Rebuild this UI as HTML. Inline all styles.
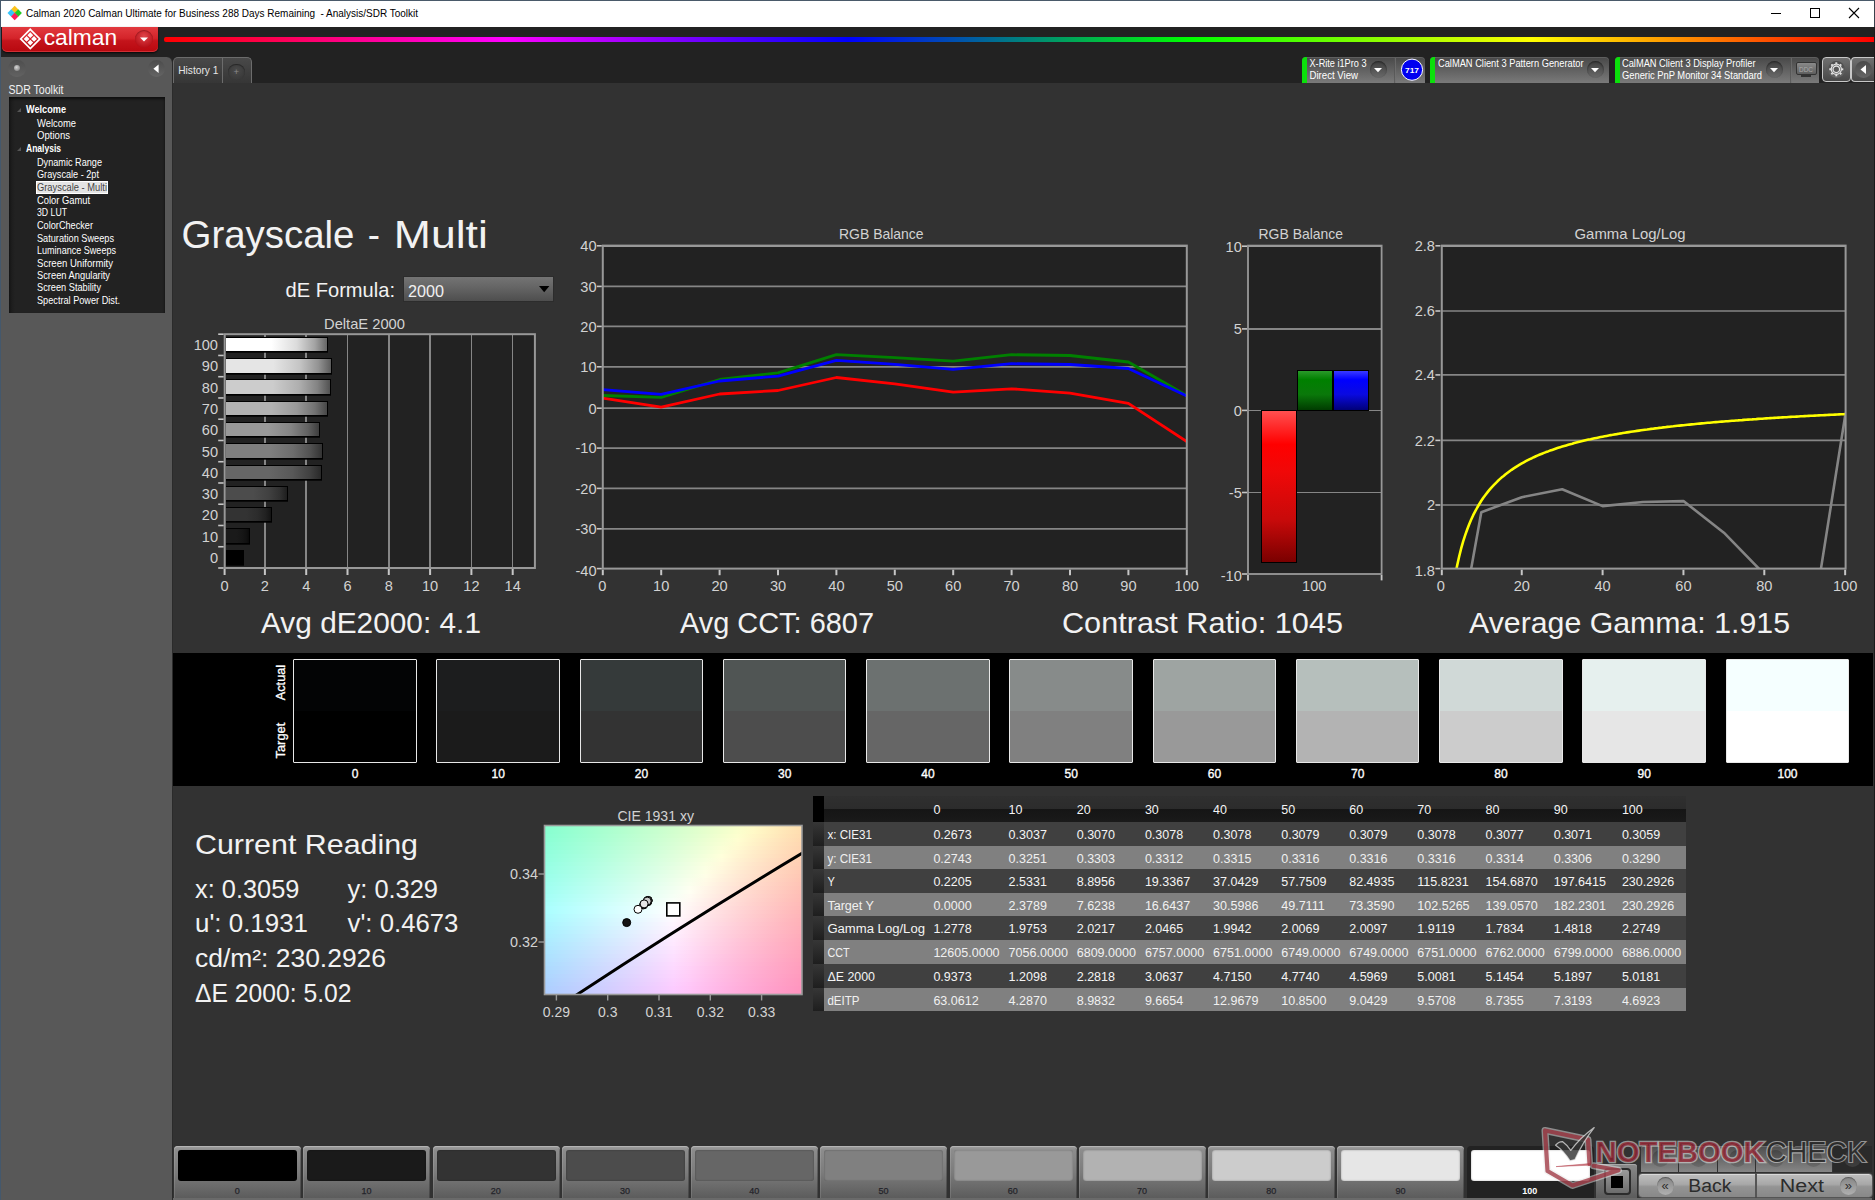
<!DOCTYPE html>
<html lang="en"><head><meta charset="utf-8"><title>Calman 2020 - Analysis/SDR Toolkit</title>
<style>
html,body{margin:0;padding:0;background:#323232;}
body{width:1875px;height:1200px;overflow:hidden;position:relative;font-family:"Liberation Sans",sans-serif;}
#root{position:absolute;left:0;top:0;width:1875px;height:1200px;overflow:hidden;background:#323232;}
#root div{position:absolute;box-sizing:border-box;}
#ov{position:absolute;left:0;top:0;}
#ov text{font-family:"Liberation Sans",sans-serif;}
</style></head><body>
<div id="root">
<div style="left:0px;top:0px;width:1875px;height:27px;background:#fff;border-top:1px solid #4a5a6a;"></div>
<div style="left:0px;top:26.6px;width:1875px;height:56.4px;background:#222;"></div>
<div style="left:1.7px;top:26.6px;width:156px;height:25px;background:linear-gradient(#e23a3f 0%,#d4242a 45%,#c4141b 55%,#b8080f 100%);border-radius:0 0 5px 5px;box-shadow:0 1px 2px rgba(0,0,0,.8), inset 0 -1px 0 rgba(255,120,120,.35);"></div>
<div style="left:135px;top:30px;width:18px;height:18px;border-radius:50%;background:radial-gradient(circle at 50% 35%,#e0444a,#b81018 75%);box-shadow:inset 0 1px 1px rgba(0,0,0,.25);"></div>
<div style="left:164px;top:37px;width:1710px;height:5px;background:linear-gradient(90deg,#ff0000 0%,#ff00ff 20%,#0000ff 40%,#00ff00 60%,#ffff00 80%,#ff0000 100%);border-radius:2px 0 0 2px;"></div>
<div style="left:0px;top:56.8px;width:173.4px;height:1143.2px;background:#585858;border-radius:0 6px 0 0;border-right:1px solid #2b2b2b;"></div>
<div style="left:8.3px;top:59.8px;width:17.4px;height:17.4px;border-radius:50%;background:linear-gradient(#4e4e4e,#626262);"></div>
<div style="left:13.6px;top:64.6px;width:6.8px;height:6.8px;border-radius:50%;background:radial-gradient(circle at 42% 38%,#d8d8d8,#8c8c8c 70%,#6a6a6a);"></div>
<div style="left:148px;top:60.4px;width:17px;height:17px;border-radius:50%;background:linear-gradient(#4c4c4c,#646464);"></div>
<div style="left:9px;top:97px;width:156px;height:216px;background:linear-gradient(90deg,#1a1a1a 0,#222 6px,#222 100%);box-shadow:inset 0 2px 3px rgba(0,0,0,.6);"></div>
<div style="left:36px;top:181px;width:72px;height:13px;background:#e4e4e4;border:1px solid #fff;"></div>
<div style="left:173.3px;top:57px;width:49.6px;height:25.8px;background:linear-gradient(#494949,#363636);border-radius:5px 0 0 0;border:1px solid #6c6c6c;border-bottom:none;"></div>
<div style="left:222px;top:57px;width:29.8px;height:25.8px;background:linear-gradient(#494949,#363636);border-radius:0 5px 0 0;border:1px solid #6c6c6c;border-bottom:none;"></div>
<div style="left:228.2px;top:63.5px;width:16.4px;height:16.4px;border-radius:50%;background:radial-gradient(circle at 50% 40%,#4a4a4a,#333);box-shadow:inset 0 1px 1px rgba(0,0,0,.4);"></div>
<div style="left:173px;top:83px;width:1702px;height:1117px;background:#323232;"></div>
<div style="left:1302px;top:57px;width:123px;height:26px;background:linear-gradient(#484848,#7a7a7a);border-radius:4px 4px 0 0;box-shadow:inset 0 1px 0 rgba(255,255,255,.12);"></div>
<div style="left:1302px;top:57px;width:5px;height:26px;background:#0be00b;border-radius:4px 0 0 0;"></div>
<div style="left:1369.5px;top:61.0px;width:17px;height:17px;border-radius:50%;background:linear-gradient(#3e3e3e,#6a6a6a);box-shadow:inset 0 1px 2px rgba(0,0,0,.45);"></div>
<div style="left:1394px;top:58px;width:2px;height:25px;background:linear-gradient(90deg,#444,#808080);opacity:.7;"></div>
<div style="left:1430px;top:57px;width:179px;height:26px;background:linear-gradient(#484848,#7a7a7a);border-radius:4px 4px 0 0;box-shadow:inset 0 1px 0 rgba(255,255,255,.12);"></div>
<div style="left:1430px;top:57px;width:5px;height:26px;background:#0be00b;border-radius:4px 0 0 0;"></div>
<div style="left:1586.5px;top:61.0px;width:17px;height:17px;border-radius:50%;background:linear-gradient(#3e3e3e,#6a6a6a);box-shadow:inset 0 1px 2px rgba(0,0,0,.45);"></div>
<div style="left:1615px;top:57px;width:204px;height:26px;background:linear-gradient(#484848,#7a7a7a);border-radius:4px 4px 0 0;box-shadow:inset 0 1px 0 rgba(255,255,255,.12);"></div>
<div style="left:1615px;top:57px;width:5px;height:26px;background:#0be00b;border-radius:4px 0 0 0;"></div>
<div style="left:1765.5px;top:61.0px;width:17px;height:17px;border-radius:50%;background:linear-gradient(#3e3e3e,#6a6a6a);box-shadow:inset 0 1px 2px rgba(0,0,0,.45);"></div>
<div style="left:1790px;top:58px;width:2px;height:25px;background:linear-gradient(90deg,#444,#808080);opacity:.7;"></div>
<div style="left:1795.5px;top:61.5px;width:21px;height:13px;background:linear-gradient(#8a8a8a,#5e5e5e);border:1.5px solid #333;border-radius:2px;"></div>
<div style="left:1801px;top:74.5px;width:10px;height:2px;background:#333;"></div>
<div style="left:1822px;top:57px;width:29px;height:25px;background:linear-gradient(#707070,#484848);border:1px solid #c8c8c8;border-radius:4px;"></div>
<div style="left:1851px;top:57px;width:23px;height:25px;background:linear-gradient(#707070,#484848);border:1px solid #c8c8c8;border-radius:4px 0 0 4px;border-right:none;"></div>
<div style="left:1828px;top:61px;width:17px;height:17px;border-radius:50%;background:linear-gradient(#4a4a4a,#666);"></div>
<div style="left:1855px;top:61px;width:17px;height:17px;border-radius:50%;background:linear-gradient(#4a4a4a,#666);"></div>
<div style="left:0px;top:0px;width:1.2px;height:1200px;background:#44586c;"></div>
<div style="left:1873.6px;top:26.6px;width:1.4px;height:1174px;background:#1a1a1a;"></div>
<div style="left:1873.8px;top:0px;width:1.2px;height:27px;background:#39424c;"></div>
<div style="left:402.8px;top:275.6px;width:151.6px;height:26px;background:linear-gradient(#747474,#646464 45%,#4e4e4e);border:1px solid #2c2c2c;"></div>
<div style="left:224.7px;top:334.2px;width:310.2px;height:233.8px;background:#222222;"></div>
<div style="left:264.1px;top:334.2px;width:1.6px;height:233.8px;background:#868686;"></div>
<div style="left:305.4px;top:334.2px;width:1.6px;height:233.8px;background:#868686;"></div>
<div style="left:346.7px;top:334.2px;width:1.6px;height:233.8px;background:#868686;"></div>
<div style="left:388.0px;top:334.2px;width:1.6px;height:233.8px;background:#868686;"></div>
<div style="left:429.3px;top:334.2px;width:1.6px;height:233.8px;background:#868686;"></div>
<div style="left:470.6px;top:334.2px;width:1.6px;height:233.8px;background:#868686;"></div>
<div style="left:511.9px;top:334.2px;width:1.6px;height:233.8px;background:#868686;"></div>
<div style="left:225.7px;top:336.9px;width:102.7px;height:15.4px;background:linear-gradient(90deg,rgb(255,255,255) 0%,rgb(255,255,255) 45%,rgb(219,219,219) 70%,rgb(163,163,163) 88%,rgb(102,102,102) 100%);border:1px solid #000;border-left:none;box-shadow:0 1px 0 rgba(0,0,0,.7);"></div>
<div style="left:225.7px;top:358.2px;width:106.3px;height:15.4px;background:linear-gradient(90deg,rgb(229,229,229) 0%,rgb(229,229,229) 45%,rgb(197,197,197) 70%,rgb(147,147,147) 88%,rgb(92,92,92) 100%);border:1px solid #000;border-left:none;box-shadow:0 1px 0 rgba(0,0,0,.7);"></div>
<div style="left:225.7px;top:379.4px;width:105.4px;height:15.4px;background:linear-gradient(90deg,rgb(204,204,204) 0%,rgb(204,204,204) 45%,rgb(175,175,175) 70%,rgb(131,131,131) 88%,rgb(82,82,82) 100%);border:1px solid #000;border-left:none;box-shadow:0 1px 0 rgba(0,0,0,.7);"></div>
<div style="left:225.7px;top:400.7px;width:102.5px;height:15.4px;background:linear-gradient(90deg,rgb(178,178,178) 0%,rgb(178,178,178) 45%,rgb(153,153,153) 70%,rgb(114,114,114) 88%,rgb(71,71,71) 100%);border:1px solid #000;border-left:none;box-shadow:0 1px 0 rgba(0,0,0,.7);"></div>
<div style="left:225.7px;top:421.9px;width:94.0px;height:15.4px;background:linear-gradient(90deg,rgb(153,153,153) 0%,rgb(153,153,153) 45%,rgb(132,132,132) 70%,rgb(98,98,98) 88%,rgb(61,61,61) 100%);border:1px solid #000;border-left:none;box-shadow:0 1px 0 rgba(0,0,0,.7);"></div>
<div style="left:225.7px;top:443.2px;width:97.7px;height:15.4px;background:linear-gradient(90deg,rgb(127,127,127) 0%,rgb(127,127,127) 45%,rgb(109,109,109) 70%,rgb(81,81,81) 88%,rgb(51,51,51) 100%);border:1px solid #000;border-left:none;box-shadow:0 1px 0 rgba(0,0,0,.7);"></div>
<div style="left:225.7px;top:464.5px;width:96.5px;height:15.4px;background:linear-gradient(90deg,rgb(102,102,102) 0%,rgb(102,102,102) 45%,rgb(88,88,88) 70%,rgb(65,65,65) 88%,rgb(41,41,41) 100%);border:1px solid #000;border-left:none;box-shadow:0 1px 0 rgba(0,0,0,.7);"></div>
<div style="left:225.7px;top:485.7px;width:62.4px;height:15.4px;background:linear-gradient(90deg,rgb(76,76,76) 0%,rgb(76,76,76) 45%,rgb(65,65,65) 70%,rgb(49,49,49) 88%,rgb(30,30,30) 100%);border:1px solid #000;border-left:none;box-shadow:0 1px 0 rgba(0,0,0,.7);"></div>
<div style="left:225.7px;top:507.0px;width:46.2px;height:15.4px;background:linear-gradient(90deg,rgb(51,51,51) 0%,rgb(51,51,51) 45%,rgb(44,44,44) 70%,rgb(33,33,33) 88%,rgb(20,20,20) 100%);border:1px solid #000;border-left:none;box-shadow:0 1px 0 rgba(0,0,0,.7);"></div>
<div style="left:225.7px;top:528.2px;width:24.1px;height:15.4px;background:linear-gradient(90deg,rgb(26,26,26) 0%,rgb(26,26,26) 45%,rgb(22,22,22) 70%,rgb(17,17,17) 88%,rgb(10,10,10) 100%);border:1px solid #000;border-left:none;box-shadow:0 1px 0 rgba(0,0,0,.7);"></div>
<div style="left:225.7px;top:549.5px;width:18.5px;height:15.4px;background:linear-gradient(90deg,rgb(0,0,0) 0%,rgb(0,0,0) 45%,rgb(0,0,0) 70%,rgb(0,0,0) 88%,rgb(0,0,0) 100%);border:1px solid #000;border-left:none;box-shadow:0 1px 0 rgba(0,0,0,.7);"></div>
<div style="left:602.8px;top:245.6px;width:584.0px;height:323.0px;background:#222222;"></div>
<div style="left:1248.0px;top:245.6px;width:133.5999999999999px;height:328.4px;background:#222222;"></div>
<div style="left:1248.0px;top:328.0px;width:133.5999999999999px;height:1.7px;background:#868686;"></div>
<div style="left:1248.0px;top:409.5px;width:133.5999999999999px;height:1.7px;background:#868686;"></div>
<div style="left:1248.0px;top:491.6px;width:133.5999999999999px;height:1.7px;background:#868686;"></div>
<div style="left:1261.2px;top:409.79999999999995px;width:36px;height:153.4px;background:linear-gradient(#ff5050 0%,#ff0000 22%,#f00808 40%,#c80a0a 72%,#7a0000 100%);border:1px solid #000;"></div>
<div style="left:1297.2px;top:369.6px;width:36.2px;height:41.6px;background:linear-gradient(#2a9a2a 0%,#008000 22%,#0a780a 60%,#003c00 100%);border:1px solid #000;"></div>
<div style="left:1333.2px;top:369.6px;width:36.2px;height:41.6px;background:linear-gradient(#3a3aff 0%,#0000ff 22%,#0a0ae0 60%,#000078 100%);border:1px solid #000;"></div>
<div style="left:1441.8px;top:245.6px;width:403.79999999999995px;height:323.0px;background:#222222;"></div>
<div style="left:173.4px;top:653.3px;width:1699.2px;height:132.8px;background:#000;"></div>
<div style="left:293.0px;top:659.2px;width:123.5px;height:103.6px;background:linear-gradient(#030405 0,#030405 50%,#000000 50%,#000000 100%);border:1.5px solid #e8e8e8;border-radius:1px;"></div>
<div style="left:436.2px;top:659.2px;width:123.5px;height:103.6px;background:linear-gradient(#1c1d1e 0,#1c1d1e 50%,#1b1b1b 50%,#1b1b1b 100%);border:1.5px solid #e8e8e8;border-radius:1px;"></div>
<div style="left:579.5px;top:659.2px;width:123.5px;height:103.6px;background:linear-gradient(#353a3a 0,#353a3a 50%,#333333 50%,#333333 100%);border:1.5px solid #e8e8e8;border-radius:1px;"></div>
<div style="left:722.8px;top:659.2px;width:123.5px;height:103.6px;background:linear-gradient(#505554 0,#505554 50%,#4d4d4d 50%,#4d4d4d 100%);border:1.5px solid #e8e8e8;border-radius:1px;"></div>
<div style="left:866.0px;top:659.2px;width:123.5px;height:103.6px;background:linear-gradient(#6c7170 0,#6c7170 50%,#666666 50%,#666666 100%);border:1.5px solid #e8e8e8;border-radius:1px;"></div>
<div style="left:1009.2px;top:659.2px;width:123.5px;height:103.6px;background:linear-gradient(#878b8a 0,#878b8a 50%,#808080 50%,#808080 100%);border:1.5px solid #e8e8e8;border-radius:1px;"></div>
<div style="left:1152.5px;top:659.2px;width:123.5px;height:103.6px;background:linear-gradient(#9ea4a2 0,#9ea4a2 50%,#999999 50%,#999999 100%);border:1.5px solid #e8e8e8;border-radius:1px;"></div>
<div style="left:1295.8px;top:659.2px;width:123.5px;height:103.6px;background:linear-gradient(#b6bfbc 0,#b6bfbc 50%,#b3b3b3 50%,#b3b3b3 100%);border:1.5px solid #e8e8e8;border-radius:1px;"></div>
<div style="left:1439.0px;top:659.2px;width:123.5px;height:103.6px;background:linear-gradient(#d0d9d7 0,#d0d9d7 50%,#cccccc 50%,#cccccc 100%);border:1.5px solid #e8e8e8;border-radius:1px;"></div>
<div style="left:1582.2px;top:659.2px;width:123.5px;height:103.6px;background:linear-gradient(#e6f0ee 0,#e6f0ee 50%,#e6e6e6 50%,#e6e6e6 100%);border:1.5px solid #e8e8e8;border-radius:1px;"></div>
<div style="left:1725.5px;top:659.2px;width:123.5px;height:103.6px;background:linear-gradient(#f5ffff 0,#f5ffff 50%,#ffffff 50%,#ffffff 100%);border:1.5px solid #e8e8e8;border-radius:1px;"></div>
<div style="left:544.5px;top:825.5px;width:257.5px;height:169.0px;background:#fff;"></div>
<div style="left:544.5px;top:825.5px;width:257.5px;height:4.3px;background:linear-gradient(90deg,#87ffcf,#8fffcf,#98ffce,#a1ffce,#aaffce,#b3ffcd,#bdffcd,#c6ffcc,#d0ffcc,#daffcc,#e4ffcb,#eeffcb,#f8ffca,#fffbc7,#fff1be,#ffe8b7,#ffdfaf);"></div>
<div style="left:544.5px;top:829.5px;width:257.5px;height:4.3px;background:linear-gradient(90deg,#88ffd1,#91ffd1,#9affd1,#a3ffd0,#acffd0,#b5ffcf,#bfffcf,#c8ffcf,#d2ffce,#dcffce,#e6ffcd,#f0ffcd,#fbffcd,#fff9c7,#ffefbf,#ffe5b7,#ffddb0);"></div>
<div style="left:544.5px;top:833.5px;width:257.5px;height:4.3px;background:linear-gradient(90deg,#8affd3,#92ffd3,#9bffd3,#a4ffd2,#aeffd2,#b7ffd2,#c1ffd1,#caffd1,#d4ffd0,#deffd0,#e8ffd0,#f3ffcf,#fdffcf,#fff6c7,#ffedbf,#ffe3b7,#ffdbb0);"></div>
<div style="left:544.5px;top:837.5px;width:257.5px;height:4.3px;background:linear-gradient(90deg,#8bffd5,#94ffd5,#9dffd5,#a6ffd4,#afffd4,#b9ffd4,#c2ffd3,#ccffd3,#d6ffd3,#e0ffd2,#ebffd2,#f5ffd2,#fffed1,#fff4c8,#ffeac0,#ffe1b8,#ffd9b0);"></div>
<div style="left:544.5px;top:841.5px;width:257.5px;height:4.3px;background:linear-gradient(90deg,#8dffd8,#96ffd7,#9fffd7,#a8ffd7,#b1ffd6,#bbffd6,#c4ffd6,#ceffd5,#d8ffd5,#e2ffd5,#edffd4,#f7ffd4,#fffcd1,#fff2c8,#ffe8c0,#ffdfb8,#ffd7b1);"></div>
<div style="left:544.5px;top:845.5px;width:257.5px;height:4.3px;background:linear-gradient(90deg,#8effda,#97ffd9,#a0ffd9,#aaffd9,#b3ffd9,#bdffd8,#c6ffd8,#d0ffd8,#daffd7,#e5ffd7,#efffd7,#faffd6,#fffad1,#ffefc9,#ffe6c0,#ffddb8,#ffd5b1);"></div>
<div style="left:544.5px;top:849.5px;width:257.5px;height:4.3px;background:linear-gradient(90deg,#90ffdc,#99ffdc,#a2ffdb,#acffdb,#b5ffdb,#bfffdb,#c8ffda,#d2ffda,#ddffda,#e7ffd9,#f1ffd9,#fcffd9,#fff7d2,#ffedc9,#ffe4c1,#ffdbb9,#ffd3b2);"></div>
<div style="left:544.5px;top:853.5px;width:257.5px;height:4.3px;background:linear-gradient(90deg,#92ffde,#9bffde,#a4ffde,#adffdd,#b7ffdd,#c1ffdd,#cbffdd,#d5ffdc,#dfffdc,#e9ffdc,#f4ffdb,#ffffdb,#fff5d2,#ffebc9,#ffe2c1,#ffd9b9,#ffd1b2);"></div>
<div style="left:544.5px;top:857.5px;width:257.5px;height:4.3px;background:linear-gradient(90deg,#93ffe0,#9cffe0,#a6ffe0,#afffe0,#b9ffdf,#c3ffdf,#cdffdf,#d7ffdf,#e1ffde,#ecffde,#f6ffde,#fffddc,#fff2d2,#ffe9ca,#ffdfc1,#ffd7ba,#ffcfb2);"></div>
<div style="left:544.5px;top:861.5px;width:257.5px;height:4.3px;background:linear-gradient(90deg,#95ffe3,#9effe3,#a8ffe2,#b1ffe2,#bbffe2,#c5ffe2,#cfffe1,#d9ffe1,#e3ffe1,#eeffe1,#f9ffe0,#fffadc,#fff0d3,#ffe6ca,#ffddc2,#ffd5ba,#ffcdb3);"></div>
<div style="left:544.5px;top:865.5px;width:257.5px;height:4.3px;background:linear-gradient(90deg,#97ffe5,#a0ffe5,#a9ffe5,#b3ffe4,#bdffe4,#c7ffe4,#d1ffe4,#dbffe4,#e6ffe3,#f0ffe3,#fbffe3,#fff8dc,#ffeed3,#ffe4ca,#ffdbc2,#ffd3ba,#ffcbb3);"></div>
<div style="left:544.5px;top:869.5px;width:257.5px;height:4.3px;background:linear-gradient(90deg,#98ffe7,#a2ffe7,#abffe7,#b5ffe7,#bfffe7,#c9ffe6,#d3ffe6,#ddffe6,#e8ffe6,#f3ffe6,#feffe5,#fff6dd,#ffebd3,#ffe2cb,#ffd9c3,#ffd1bb,#ffc9b4);"></div>
<div style="left:544.5px;top:873.5px;width:257.5px;height:4.3px;background:linear-gradient(90deg,#9affea,#a3ffea,#adffe9,#b7ffe9,#c1ffe9,#cbffe9,#d5ffe9,#e0ffe9,#eaffe8,#f5ffe8,#fffee7,#fff3dd,#ffe9d4,#ffe0cb,#ffd7c3,#ffcfbb,#ffc7b4);"></div>
<div style="left:544.5px;top:877.5px;width:257.5px;height:4.3px;background:linear-gradient(90deg,#9cffec,#a5ffec,#afffec,#b9ffec,#c3ffec,#cdffeb,#d7ffeb,#e2ffeb,#edffeb,#f8ffeb,#fffbe7,#fff1dd,#ffe7d4,#ffdecb,#ffd5c3,#ffcdbc,#ffc5b4);"></div>
<div style="left:544.5px;top:881.5px;width:257.5px;height:4.3px;background:linear-gradient(90deg,#9effef,#a7ffee,#b1ffee,#bbffee,#c5ffee,#cfffee,#daffee,#e4ffee,#efffed,#faffed,#fff9e7,#ffeede,#ffe5d4,#ffdbcc,#ffd3c4,#ffcbbc,#ffc3b5);"></div>
<div style="left:544.5px;top:885.5px;width:257.5px;height:4.3px;background:linear-gradient(90deg,#9ffff1,#a9fff1,#b3fff1,#bdfff1,#c7fff1,#d1fff0,#dcfff0,#e7fff0,#f1fff0,#fdfff0,#fff6e8,#ffecde,#ffe2d5,#ffd9cc,#ffd1c4,#ffc9bc,#ffc1b5);"></div>
<div style="left:544.5px;top:889.5px;width:257.5px;height:4.3px;background:linear-gradient(90deg,#a1fff3,#abfff3,#b5fff3,#bffff3,#c9fff3,#d3fff3,#defff3,#e9fff3,#f4fff3,#fffff3,#fff4e8,#ffeade,#ffe0d5,#ffd7cc,#ffcfc4,#ffc7bd,#ffbfb5);"></div>
<div style="left:544.5px;top:893.5px;width:257.5px;height:4.3px;background:linear-gradient(90deg,#a3fff6,#adfff6,#b7fff6,#c1fff6,#cbfff6,#d6fff6,#e0fff6,#ebfff5,#f6fff5,#fffcf3,#fff2e8,#ffe7df,#ffded5,#ffd5cd,#ffcdc5,#ffc5bd,#ffbdb6);"></div>
<div style="left:544.5px;top:897.5px;width:257.5px;height:4.3px;background:linear-gradient(90deg,#a5fff8,#affff8,#b9fff8,#c3fff8,#cdfff8,#d8fff8,#e3fff8,#eefff8,#f9fff8,#fffaf3,#ffefe9,#ffe5df,#ffdcd6,#ffd3cd,#ffcbc5,#ffc3bd,#ffbcb6);"></div>
<div style="left:544.5px;top:901.5px;width:257.5px;height:4.3px;background:linear-gradient(90deg,#a7fffb,#b1fffb,#bbfffb,#c5fffb,#d0fffb,#dafffb,#e5fffb,#f0fffb,#fbfffb,#fff7f3,#ffede9,#ffe3df,#ffdad6,#ffd1cd,#ffc9c5,#ffc1be,#ffbab7);"></div>
<div style="left:544.5px;top:905.5px;width:257.5px;height:4.3px;background:linear-gradient(90deg,#a9fffe,#b3fffe,#bdfffe,#c7fffe,#d2fffe,#dcfffe,#e7fffe,#f3fffe,#fefffe,#fff5f3,#ffeae9,#ffe1df,#ffd7d6,#ffcfce,#ffc7c6,#ffbfbe,#ffb8b7);"></div>
<div style="left:544.5px;top:909.5px;width:257.5px;height:4.3px;background:linear-gradient(90deg,#aafeff,#b4feff,#befeff,#c8feff,#d3feff,#defeff,#e9feff,#f4feff,#fffdff,#fff2f4,#ffe8e9,#ffdee0,#ffd5d7,#ffcdce,#ffc5c6,#ffbdbe,#ffb6b7);"></div>
<div style="left:544.5px;top:913.5px;width:257.5px;height:4.3px;background:linear-gradient(90deg,#aafbff,#b4fbff,#befbff,#c8fbff,#d3fbff,#defbff,#e9fbff,#f4fbff,#fffbff,#fff0f4,#ffe6ea,#ffdce0,#ffd3d7,#ffcbce,#ffc3c6,#ffbbbf,#ffb4b8);"></div>
<div style="left:544.5px;top:917.5px;width:257.5px;height:4.3px;background:linear-gradient(90deg,#aaf9ff,#b4f9ff,#bef8ff,#c8f8ff,#d3f8ff,#def8ff,#e8f8ff,#f3f8ff,#fff8ff,#ffedf4,#ffe3ea,#ffdae0,#ffd1d7,#ffc9cf,#ffc1c7,#ffb9bf,#ffb2b8);"></div>
<div style="left:544.5px;top:921.5px;width:257.5px;height:4.3px;background:linear-gradient(90deg,#aaf6ff,#b4f6ff,#bef6ff,#c8f6ff,#d3f6ff,#ddf6ff,#e8f5ff,#f3f5ff,#fff5ff,#ffebf4,#ffe1ea,#ffd8e1,#ffcfd8,#ffc7cf,#ffbfc7,#ffb7bf,#ffb1b8);"></div>
<div style="left:544.5px;top:925.5px;width:257.5px;height:4.3px;background:linear-gradient(90deg,#aaf4ff,#b4f3ff,#bef3ff,#c8f3ff,#d3f3ff,#ddf3ff,#e8f3ff,#f3f3ff,#fef2ff,#ffe9f5,#ffdfea,#ffd5e1,#ffcdd8,#ffc5cf,#ffbdc7,#ffb6c0,#ffafb9);"></div>
<div style="left:544.5px;top:929.5px;width:257.5px;height:4.3px;background:linear-gradient(90deg,#aaf1ff,#b4f1ff,#bef1ff,#c8f1ff,#d3f0ff,#ddf0ff,#e8f0ff,#f3f0ff,#fef0ff,#ffe6f5,#ffdceb,#ffd3e1,#ffcbd8,#ffc3d0,#ffbbc8,#ffb4c0,#ffadb9);"></div>
<div style="left:544.5px;top:933.5px;width:257.5px;height:4.3px;background:linear-gradient(90deg,#abefff,#b4eeff,#beeeff,#c9eeff,#d3eeff,#ddeeff,#e8edff,#f3edff,#feedff,#ffe4f5,#ffdaeb,#ffd1e1,#ffc9d8,#ffc1d0,#ffb9c8,#ffb2c1,#ffabb9);"></div>
<div style="left:544.5px;top:937.5px;width:257.5px;height:4.3px;background:linear-gradient(90deg,#abecff,#b5ecff,#beecff,#c9ebff,#d3ebff,#ddebff,#e8ebff,#f3ebff,#feeaff,#ffe1f5,#ffd8eb,#ffcfe2,#ffc6d9,#ffbfd0,#ffb7c8,#ffb0c1,#ffa9ba);"></div>
<div style="left:544.5px;top:941.5px;width:257.5px;height:4.3px;background:linear-gradient(90deg,#abeaff,#b5e9ff,#bfe9ff,#c9e9ff,#d3e9ff,#dde9ff,#e8e8ff,#f3e8ff,#fee8ff,#ffdff6,#ffd6eb,#ffcde2,#ffc4d9,#ffbdd1,#ffb5c9,#ffaec1,#ffa8ba);"></div>
<div style="left:544.5px;top:945.5px;width:257.5px;height:4.3px;background:linear-gradient(90deg,#abe7ff,#b5e7ff,#bfe7ff,#c9e6ff,#d3e6ff,#dde6ff,#e8e6ff,#f2e5ff,#fde5ff,#ffddf6,#ffd3ec,#ffcbe2,#ffc2d9,#ffbbd1,#ffb3c9,#ffadc2,#ffa6ba);"></div>
<div style="left:544.5px;top:949.5px;width:257.5px;height:4.3px;background:linear-gradient(90deg,#abe5ff,#b5e4ff,#bfe4ff,#c9e4ff,#d3e4ff,#dde3ff,#e8e3ff,#f2e3ff,#fde3ff,#ffdaf6,#ffd1ec,#ffc9e2,#ffc0da,#ffb9d1,#ffb2c9,#ffabc2,#ffa4bb);"></div>
<div style="left:544.5px;top:953.5px;width:257.5px;height:4.3px;background:linear-gradient(90deg,#abe2ff,#b5e2ff,#bfe2ff,#c9e2ff,#d3e1ff,#dde1ff,#e8e1ff,#f2e0ff,#fde0ff,#ffd8f6,#ffcfec,#ffc6e3,#ffbeda,#ffb7d2,#ffb0ca,#ffa9c2,#ffa3bb);"></div>
<div style="left:544.5px;top:957.5px;width:257.5px;height:4.3px;background:linear-gradient(90deg,#ace0ff,#b5e0ff,#bfdfff,#c9dfff,#d3dfff,#dddeff,#e7deff,#f2deff,#fddeff,#ffd6f6,#ffcdec,#ffc4e3,#ffbcda,#ffb5d2,#ffaeca,#ffa7c3,#ffa1bb);"></div>
<div style="left:544.5px;top:961.5px;width:257.5px;height:4.3px;background:linear-gradient(90deg,#acdeff,#b5ddff,#bfddff,#c9ddff,#d3dcff,#dddcff,#e7dcff,#f2dbff,#fddbff,#ffd4f7,#ffcbed,#ffc2e3,#ffbada,#ffb3d2,#ffacca,#ffa5c3,#ff9fbc);"></div>
<div style="left:544.5px;top:965.5px;width:257.5px;height:4.3px;background:linear-gradient(90deg,#acdbff,#b5dbff,#bfdbff,#c9daff,#d3daff,#dddaff,#e7d9ff,#f2d9ff,#fdd9ff,#ffd1f7,#ffc8ed,#ffc0e4,#ffb8db,#ffb1d2,#ffaacb,#ffa4c3,#ff9dbc);"></div>
<div style="left:544.5px;top:969.5px;width:257.5px;height:4.3px;background:linear-gradient(90deg,#acd9ff,#b5d9ff,#bfd8ff,#c9d8ff,#d3d8ff,#ddd7ff,#e7d7ff,#f2d6ff,#fcd6ff,#ffcff7,#ffc6ed,#ffbee4,#ffb6db,#ffafd3,#ffa8cb,#ffa2c4,#ff9cbd);"></div>
<div style="left:544.5px;top:973.5px;width:257.5px;height:4.3px;background:linear-gradient(90deg,#acd7ff,#b6d6ff,#bfd6ff,#c9d6ff,#d3d5ff,#ddd5ff,#e7d4ff,#f2d4ff,#fcd4ff,#ffcdf7,#ffc4ed,#ffbce4,#ffb4db,#ffadd3,#ffa7cb,#ffa0c4,#ff9abd);"></div>
<div style="left:544.5px;top:977.5px;width:257.5px;height:4.3px;background:linear-gradient(90deg,#acd4ff,#b6d4ff,#bfd4ff,#c9d3ff,#d3d3ff,#ddd2ff,#e7d2ff,#f1d2ff,#fcd1ff,#ffcbf8,#ffc2ee,#ffbae4,#ffb3dc,#ffabd3,#ffa5cc,#ff9ec4,#ff98bd);"></div>
<div style="left:544.5px;top:981.5px;width:257.5px;height:4.3px;background:linear-gradient(90deg,#acd2ff,#b6d2ff,#bfd1ff,#c9d1ff,#d3d0ff,#ddd0ff,#e7d0ff,#f1cfff,#fccfff,#ffc8f8,#ffc0ee,#ffb8e5,#ffb1dc,#ffaad4,#ffa3cc,#ff9dc4,#ff97be);"></div>
<div style="left:544.5px;top:985.5px;width:257.5px;height:4.3px;background:linear-gradient(90deg,#add0ff,#b6cfff,#bfcfff,#c9cfff,#d3ceff,#ddceff,#e7cdff,#f1cdff,#fcccff,#ffc6f8,#ffbeee,#ffb6e5,#ffafdc,#ffa8d4,#ffa1cc,#ff9bc5,#ff95be);"></div>
<div style="left:544.5px;top:989.5px;width:257.5px;height:4.3px;background:linear-gradient(90deg,#adceff,#b6cdff,#bfcdff,#c9ccff,#d3ccff,#ddcbff,#e7cbff,#f1caff,#fbcaff,#ffc4f8,#ffbcee,#ffb4e5,#ffaddc,#ffa6d4,#ff9fcc,#ff99c5,#ff94be);"></div>
<div style="left:544.5px;top:993.5px;width:257.5px;height:1.3px;background:linear-gradient(90deg,#adccff,#b6ccff,#c0cbff,#c9cbff,#d3caff,#ddcaff,#e7c9ff,#f1c9ff,#fbc8ff,#ffc3f8,#ffbbee,#ffb3e5,#ffacdd,#ffa5d4,#ff9ecd,#ff98c5,#ff92be);"></div>
<div style="left:813.4px;top:796.0px;width:872.8000000000001px;height:26.0px;background:linear-gradient(#2f2f2f 0,#2c2c2c 48%,#151515 52%,#1a1a1a 100%);"></div>
<div style="left:813.4px;top:796.0px;width:11px;height:26.0px;background:#000;"></div>
<div style="left:813.4px;top:822.0px;width:872.8000000000001px;height:23.6px;background:#404040;"></div>
<div style="left:813.4px;top:822.0px;width:11px;height:23.6px;background:linear-gradient(#363636,#1e1e1e);"></div>
<div style="left:813.4px;top:845.6px;width:872.8000000000001px;height:23.4px;background:#808080;"></div>
<div style="left:813.4px;top:845.6px;width:11px;height:23.4px;background:linear-gradient(#363636,#1e1e1e);"></div>
<div style="left:813.4px;top:869.0px;width:872.8000000000001px;height:23.6px;background:#404040;"></div>
<div style="left:813.4px;top:869.0px;width:11px;height:23.6px;background:linear-gradient(#363636,#1e1e1e);"></div>
<div style="left:813.4px;top:892.6px;width:872.8000000000001px;height:23.4px;background:#808080;"></div>
<div style="left:813.4px;top:892.6px;width:11px;height:23.4px;background:linear-gradient(#363636,#1e1e1e);"></div>
<div style="left:813.4px;top:916.0px;width:872.8000000000001px;height:24.0px;background:#404040;"></div>
<div style="left:813.4px;top:916.0px;width:11px;height:24.0px;background:linear-gradient(#363636,#1e1e1e);"></div>
<div style="left:813.4px;top:940.0px;width:872.8000000000001px;height:23.6px;background:#808080;"></div>
<div style="left:813.4px;top:940.0px;width:11px;height:23.6px;background:linear-gradient(#363636,#1e1e1e);"></div>
<div style="left:813.4px;top:963.6px;width:872.8000000000001px;height:24.0px;background:#404040;"></div>
<div style="left:813.4px;top:963.6px;width:11px;height:24.0px;background:linear-gradient(#363636,#1e1e1e);"></div>
<div style="left:813.4px;top:987.6px;width:872.8000000000001px;height:23.8px;background:#808080;"></div>
<div style="left:813.4px;top:987.6px;width:11px;height:23.8px;background:linear-gradient(#363636,#1e1e1e);"></div>
<div style="left:173px;top:1198px;width:1699px;height:2px;background:#6a6a6a;"></div>
<div style="left:174.0px;top:1146px;width:127.2px;height:52px;background:linear-gradient(#a0a0a0 0,#8c8c8c 8%,#7c7c7c 50%,#5c5c5c 100%);border-radius:4px 4px 0 0;box-shadow:inset 0 1px 0 #b4b4b4, inset 1px 0 0 rgba(255,255,255,.12), inset -1px 0 0 rgba(0,0,0,.25);"></div>
<div style="left:178.0px;top:1150px;width:119.2px;height:31.2px;background:rgb(0,0,0);border-radius:3px;box-shadow:inset 0 0 2px rgba(0,0,0,.35);"></div>
<div style="left:303.2px;top:1146px;width:127.2px;height:52px;background:linear-gradient(#a0a0a0 0,#8c8c8c 8%,#7c7c7c 50%,#5c5c5c 100%);border-radius:4px 4px 0 0;box-shadow:inset 0 1px 0 #b4b4b4, inset 1px 0 0 rgba(255,255,255,.12), inset -1px 0 0 rgba(0,0,0,.25);"></div>
<div style="left:307.2px;top:1150px;width:119.2px;height:31.2px;background:rgb(26,26,26);border-radius:3px;box-shadow:inset 0 0 2px rgba(0,0,0,.35);"></div>
<div style="left:432.5px;top:1146px;width:127.2px;height:52px;background:linear-gradient(#a0a0a0 0,#8c8c8c 8%,#7c7c7c 50%,#5c5c5c 100%);border-radius:4px 4px 0 0;box-shadow:inset 0 1px 0 #b4b4b4, inset 1px 0 0 rgba(255,255,255,.12), inset -1px 0 0 rgba(0,0,0,.25);"></div>
<div style="left:436.5px;top:1150px;width:119.2px;height:31.2px;background:rgb(51,51,51);border-radius:3px;box-shadow:inset 0 0 2px rgba(0,0,0,.35);"></div>
<div style="left:561.8px;top:1146px;width:127.2px;height:52px;background:linear-gradient(#a0a0a0 0,#8c8c8c 8%,#7c7c7c 50%,#5c5c5c 100%);border-radius:4px 4px 0 0;box-shadow:inset 0 1px 0 #b4b4b4, inset 1px 0 0 rgba(255,255,255,.12), inset -1px 0 0 rgba(0,0,0,.25);"></div>
<div style="left:565.8px;top:1150px;width:119.2px;height:31.2px;background:rgb(76,76,76);border-radius:3px;box-shadow:inset 0 0 2px rgba(0,0,0,.35);"></div>
<div style="left:691.0px;top:1146px;width:127.2px;height:52px;background:linear-gradient(#a0a0a0 0,#8c8c8c 8%,#7c7c7c 50%,#5c5c5c 100%);border-radius:4px 4px 0 0;box-shadow:inset 0 1px 0 #b4b4b4, inset 1px 0 0 rgba(255,255,255,.12), inset -1px 0 0 rgba(0,0,0,.25);"></div>
<div style="left:695.0px;top:1150px;width:119.2px;height:31.2px;background:rgb(102,102,102);border-radius:3px;box-shadow:inset 0 0 2px rgba(0,0,0,.35);"></div>
<div style="left:820.2px;top:1146px;width:127.2px;height:52px;background:linear-gradient(#a0a0a0 0,#8c8c8c 8%,#7c7c7c 50%,#5c5c5c 100%);border-radius:4px 4px 0 0;box-shadow:inset 0 1px 0 #b4b4b4, inset 1px 0 0 rgba(255,255,255,.12), inset -1px 0 0 rgba(0,0,0,.25);"></div>
<div style="left:824.2px;top:1150px;width:119.2px;height:31.2px;background:rgb(128,128,128);border-radius:3px;box-shadow:inset 0 0 2px rgba(0,0,0,.35);"></div>
<div style="left:949.5px;top:1146px;width:127.2px;height:52px;background:linear-gradient(#a0a0a0 0,#8c8c8c 8%,#7c7c7c 50%,#5c5c5c 100%);border-radius:4px 4px 0 0;box-shadow:inset 0 1px 0 #b4b4b4, inset 1px 0 0 rgba(255,255,255,.12), inset -1px 0 0 rgba(0,0,0,.25);"></div>
<div style="left:953.5px;top:1150px;width:119.2px;height:31.2px;background:rgb(153,153,153);border-radius:3px;box-shadow:inset 0 0 2px rgba(0,0,0,.35);"></div>
<div style="left:1078.8px;top:1146px;width:127.2px;height:52px;background:linear-gradient(#a0a0a0 0,#8c8c8c 8%,#7c7c7c 50%,#5c5c5c 100%);border-radius:4px 4px 0 0;box-shadow:inset 0 1px 0 #b4b4b4, inset 1px 0 0 rgba(255,255,255,.12), inset -1px 0 0 rgba(0,0,0,.25);"></div>
<div style="left:1082.8px;top:1150px;width:119.2px;height:31.2px;background:rgb(178,178,178);border-radius:3px;box-shadow:inset 0 0 2px rgba(0,0,0,.35);"></div>
<div style="left:1208.0px;top:1146px;width:127.2px;height:52px;background:linear-gradient(#a0a0a0 0,#8c8c8c 8%,#7c7c7c 50%,#5c5c5c 100%);border-radius:4px 4px 0 0;box-shadow:inset 0 1px 0 #b4b4b4, inset 1px 0 0 rgba(255,255,255,.12), inset -1px 0 0 rgba(0,0,0,.25);"></div>
<div style="left:1212.0px;top:1150px;width:119.2px;height:31.2px;background:rgb(204,204,204);border-radius:3px;box-shadow:inset 0 0 2px rgba(0,0,0,.35);"></div>
<div style="left:1337.2px;top:1146px;width:127.2px;height:52px;background:linear-gradient(#a0a0a0 0,#8c8c8c 8%,#7c7c7c 50%,#5c5c5c 100%);border-radius:4px 4px 0 0;box-shadow:inset 0 1px 0 #b4b4b4, inset 1px 0 0 rgba(255,255,255,.12), inset -1px 0 0 rgba(0,0,0,.25);"></div>
<div style="left:1341.2px;top:1150px;width:119.2px;height:31.2px;background:rgb(230,230,230);border-radius:3px;box-shadow:inset 0 0 2px rgba(0,0,0,.35);"></div>
<div style="left:1466.5px;top:1146px;width:127.2px;height:52px;background:#222;border-radius:4px 4px 0 0;"></div>
<div style="left:1470.5px;top:1150px;width:119.2px;height:31.2px;background:rgb(255,255,255);border-radius:3px;box-shadow:inset 0 0 2px rgba(0,0,0,.35);"></div>
<div style="left:1596px;top:1164px;width:41px;height:34px;background:linear-gradient(#8a8a8a,#5c5c5c);border-radius:3px 3px 0 0;box-shadow:inset 0 1px 0 #a8a8a8;"></div>
<div style="left:1604px;top:1168px;width:27px;height:27px;border:2px solid #2c2c2c;border-radius:4px;background:linear-gradient(#9a9a9a,#6c6c6c);"></div>
<div style="left:1611px;top:1176px;width:12px;height:12px;background:#000;"></div>
<div style="left:1640.5px;top:1146px;width:37.9px;height:25.8px;background:linear-gradient(#4e4e4e,#868686);border-radius:3px 3px 0 0;box-shadow:inset 0 1px 0 #6c6c6c;"></div>
<div style="left:1651.5px;top:1150px;width:17px;height:17px;border-radius:50%;background:linear-gradient(#444,#6a6a6a);"></div>
<div style="left:1679.2px;top:1146px;width:37.6px;height:25.8px;background:linear-gradient(#4e4e4e,#868686);border-radius:3px 3px 0 0;box-shadow:inset 0 1px 0 #6c6c6c;"></div>
<div style="left:1690.2px;top:1150px;width:17px;height:17px;border-radius:50%;background:linear-gradient(#444,#6a6a6a);"></div>
<div style="left:1717.6px;top:1146px;width:37.2px;height:25.8px;background:linear-gradient(#4e4e4e,#868686);border-radius:3px 3px 0 0;box-shadow:inset 0 1px 0 #6c6c6c;"></div>
<div style="left:1728.6px;top:1150px;width:17px;height:17px;border-radius:50%;background:linear-gradient(#444,#6a6a6a);"></div>
<div style="left:1755.6px;top:1146px;width:38.0px;height:25.8px;background:linear-gradient(#4e4e4e,#868686);border-radius:3px 3px 0 0;box-shadow:inset 0 1px 0 #6c6c6c;"></div>
<div style="left:1766.6px;top:1150px;width:17px;height:17px;border-radius:50%;background:linear-gradient(#444,#6a6a6a);"></div>
<div style="left:1794.4px;top:1146px;width:37.7px;height:25.8px;background:linear-gradient(#4e4e4e,#868686);border-radius:3px 3px 0 0;box-shadow:inset 0 1px 0 #6c6c6c;"></div>
<div style="left:1805.4px;top:1150px;width:17px;height:17px;border-radius:50%;background:linear-gradient(#444,#6a6a6a);"></div>
<div style="left:1833px;top:1146px;width:39px;height:26px;background:#2a2a2a;"></div>
<div style="left:1844px;top:1150px;width:17px;height:17px;border-radius:50%;background:linear-gradient(#303030,#3e3e3e);"></div>
<div style="left:1638.4px;top:1172.5px;width:117.6px;height:25.5px;background:linear-gradient(#bebebe 0,#a8a8a8 45%,#949494 55%,#888 100%);border:1px solid #555;box-shadow:inset 0 1px 0 #d8d8d8;border-radius:4px 0 0 4px;"></div>
<div style="left:1755.5px;top:1172.5px;width:117px;height:25.5px;background:linear-gradient(#bebebe 0,#a8a8a8 45%,#949494 55%,#888 100%);border:1px solid #555;box-shadow:inset 0 1px 0 #d8d8d8;border-radius:0 4px 4px 0;"></div>
<div style="left:1656.5px;top:1177px;width:17.5px;height:17.5px;border-radius:50%;background:linear-gradient(#868686,#b0b0b0);box-shadow:inset 0 1px 1px rgba(0,0,0,.35);"></div>
<div style="left:1839.5px;top:1177px;width:17.5px;height:17.5px;border-radius:50%;background:linear-gradient(#868686,#b0b0b0);box-shadow:inset 0 1px 1px rgba(0,0,0,.35);"></div>
<svg id="ov" width="1875" height="1200" viewBox="0 0 1875 1200">
<g transform="translate(14.7,13)"><path d="M0 -7.2 L3.7 -3.5 L0 0.2 L-3.7 -3.5 Z" fill="#fcc21a"/><path d="M-3.5 -3.7 L0.2 0 L-3.5 3.7 L-7.2 0 Z" fill="#35c4fb"/><path d="M3.5 -3.7 L7.2 0 L3.5 3.7 L-0.2 0 Z" fill="#23c923"/><path d="M0 -0.2 L3.7 3.5 L0 7.2 L-3.7 3.5 Z" fill="#fb1c5c"/></g>
<text x="26" y="17.2" font-size="11.2" fill="#000" textLength="392.0" lengthAdjust="spacingAndGlyphs" xml:space="preserve">Calman 2020 Calman Ultimate for Business 288 Days Remaining  - Analysis/SDR Toolkit</text>
<line x1="1771" y1="13.5" x2="1781" y2="13.5" stroke="#000" stroke-width="1" />
<rect x="1810.5" y="8.5" width="9" height="9" fill="none" stroke="#000" stroke-width="1" />
<path d="M1849 8 L1859 18 M1859 8 L1849 18" stroke="#000" stroke-width="1.1" fill="none"/>
<g transform="translate(30.3,38.9)"><path d="M0 -9.6 L9.6 0 L0 9.6 L-9.6 0 Z" fill="none" stroke="#fff" stroke-width="1.7"/><path d="M0 -6.6 L2.9 -3.7 L0 -0.8 L-2.9 -3.7 Z M0 0.8 L2.9 3.7 L0 6.6 L-2.9 3.7 Z M-3.7 -2.9 L-0.8 0 L-3.7 2.9 L-6.6 0 Z M3.7 -2.9 L6.6 0 L3.7 2.9 L0.8 0 Z" fill="#fff"/></g>
<text x="43.7" y="44.7" font-size="22" fill="#fff" textLength="73.5" lengthAdjust="spacingAndGlyphs" >calman</text>
<path d="M140 37.5 L148 37.5 L144 41.5 Z" fill="#fff"/>
<path d="M158.6 64.6 L158.6 73 L153.4 68.8 Z" fill="#fff"/>
<text x="8.5" y="93.5" font-size="12" fill="#f0f0f0" textLength="55.0" lengthAdjust="spacingAndGlyphs" >SDR Toolkit</text>
<text x="26" y="113.3" font-size="10.1" fill="#fff" textLength="40.0" lengthAdjust="spacingAndGlyphs" font-weight="bold" >Welcome</text>
<text x="37" y="127.0" font-size="10.1" fill="#fff" textLength="39.0" lengthAdjust="spacingAndGlyphs" >Welcome</text>
<text x="37" y="139.2" font-size="10.1" fill="#fff" textLength="33.0" lengthAdjust="spacingAndGlyphs" >Options</text>
<text x="26" y="152.0" font-size="10.1" fill="#fff" textLength="35.0" lengthAdjust="spacingAndGlyphs" font-weight="bold" >Analysis</text>
<text x="37" y="165.8" font-size="10.1" fill="#fff" textLength="65.0" lengthAdjust="spacingAndGlyphs" >Dynamic Range</text>
<text x="37" y="177.8" font-size="10.1" fill="#fff" textLength="62.0" lengthAdjust="spacingAndGlyphs" >Grayscale - 2pt</text>
<text x="37" y="190.6" font-size="10.1" fill="#444" textLength="70.0" lengthAdjust="spacingAndGlyphs" >Grayscale - Multi</text>
<text x="37" y="203.6" font-size="10.1" fill="#fff" textLength="53.0" lengthAdjust="spacingAndGlyphs" >Color Gamut</text>
<text x="37" y="215.6" font-size="10.1" fill="#fff" textLength="30.0" lengthAdjust="spacingAndGlyphs" >3D LUT</text>
<text x="37" y="228.5" font-size="10.1" fill="#fff" textLength="56.0" lengthAdjust="spacingAndGlyphs" >ColorChecker</text>
<text x="37" y="241.5" font-size="10.1" fill="#fff" textLength="77.0" lengthAdjust="spacingAndGlyphs" >Saturation Sweeps</text>
<text x="37" y="253.6" font-size="10.1" fill="#fff" textLength="79.0" lengthAdjust="spacingAndGlyphs" >Luminance Sweeps</text>
<text x="37" y="266.5" font-size="10.1" fill="#fff" textLength="76.0" lengthAdjust="spacingAndGlyphs" >Screen Uniformity</text>
<text x="37" y="279.3" font-size="10.1" fill="#fff" textLength="73.0" lengthAdjust="spacingAndGlyphs" >Screen Angularity</text>
<text x="37" y="291.3" font-size="10.1" fill="#fff" textLength="64.0" lengthAdjust="spacingAndGlyphs" >Screen Stability</text>
<text x="37" y="304.3" font-size="10.1" fill="#fff" textLength="83.0" lengthAdjust="spacingAndGlyphs" >Spectral Power Dist.</text>
<path d="M21 108 L21 112 L17 112 Z" fill="#555"/>
<path d="M21 147 L21 151 L17 151 Z" fill="#555"/>
<text x="178.2" y="74.2" font-size="10.2" fill="#e6e6e6" textLength="40.2" lengthAdjust="spacingAndGlyphs" >History 1</text>
<text x="236.4" y="75" font-size="9.5" fill="#8a8a8a" text-anchor="middle" >+</text>
<text x="1309.5" y="67" font-size="10.2" fill="#fff" textLength="57.0" lengthAdjust="spacingAndGlyphs" >X-Rite i1Pro 3</text>
<text x="1309.5" y="78.8" font-size="10.2" fill="#fff" textLength="48.5" lengthAdjust="spacingAndGlyphs" >Direct View</text>
<path d="M1374 68.0 L1382 68.0 L1378 72.3 Z" fill="#fff"/>
<circle cx="1412" cy="69.7" r="10.6" fill="#0000f0" stroke="#fff" stroke-width="1"/>
<text x="1412" y="72.6" font-size="8" fill="#fff" textLength="14.0" lengthAdjust="spacingAndGlyphs" text-anchor="middle" font-weight="bold" >717</text>
<text x="1438" y="67" font-size="10.2" fill="#fff" textLength="145.5" lengthAdjust="spacingAndGlyphs" >CalMAN Client 3 Pattern Generator</text>
<path d="M1591 68.0 L1599 68.0 L1595 72.3 Z" fill="#fff"/>
<text x="1622" y="67" font-size="10.2" fill="#fff" textLength="133.5" lengthAdjust="spacingAndGlyphs" >CalMAN Client 3 Display Profiler</text>
<text x="1622" y="78.8" font-size="10.2" fill="#fff" textLength="140.0" lengthAdjust="spacingAndGlyphs" >Generic PnP Monitor 34 Standard</text>
<path d="M1770 68.0 L1778 68.0 L1774 72.3 Z" fill="#fff"/>
<text x="1806" y="72" font-size="7.5" fill="#aaa" textLength="14.0" lengthAdjust="spacingAndGlyphs" text-anchor="middle" >DDC</text>
<g transform="translate(1836.3,69.3)" fill="none" stroke="#e4e4e4"><circle r="3.3" stroke-width="1.3"/><circle r="5.1" stroke-width="1.2"/><line x1="5.40" y1="0.00" x2="7.00" y2="0.00" stroke-width="1.9"/><line x1="3.82" y1="3.82" x2="4.95" y2="4.95" stroke-width="1.9"/><line x1="0.00" y1="5.40" x2="0.00" y2="7.00" stroke-width="1.9"/><line x1="-3.82" y1="3.82" x2="-4.95" y2="4.95" stroke-width="1.9"/><line x1="-5.40" y1="0.00" x2="-7.00" y2="0.00" stroke-width="1.9"/><line x1="-3.82" y1="-3.82" x2="-4.95" y2="-4.95" stroke-width="1.9"/><line x1="-0.00" y1="-5.40" x2="-0.00" y2="-7.00" stroke-width="1.9"/><line x1="3.82" y1="-3.82" x2="4.95" y2="-4.95" stroke-width="1.9"/></g>
<path d="M1866 65 L1866 74 L1860.5 69.5 Z" fill="#fff"/>
<text x="181.5" y="248.3" font-size="38.8" fill="#f2f2f2" textLength="173.0" lengthAdjust="spacingAndGlyphs" >Grayscale</text>
<text x="367.7" y="248.3" font-size="38.8" fill="#f2f2f2" textLength="12.2" lengthAdjust="spacingAndGlyphs" >-</text>
<text x="393.8" y="248.3" font-size="38.8" fill="#f2f2f2" textLength="94.0" lengthAdjust="spacingAndGlyphs" >Multi</text>
<text x="285.5" y="296.5" font-size="21" fill="#f2f2f2" textLength="109.5" lengthAdjust="spacingAndGlyphs" >dE Formula:</text>
<text x="408" y="296.5" font-size="17" fill="#f0f0f0" textLength="36.0" lengthAdjust="spacingAndGlyphs" >2000</text>
<path d="M539 286 L549.4 286 L544.2 292.3 Z" fill="#000"/>
<text x="364.5" y="329" font-size="14.3" fill="#d2d2d2" textLength="81.0" lengthAdjust="spacingAndGlyphs" text-anchor="middle" >DeltaE 2000</text>
<text x="218.0" y="350.22727272727275" font-size="14.6" fill="#d2d2d2" text-anchor="end" >100</text>
<line x1="218.2" y1="334.2" x2="223.7" y2="334.2" stroke="#c6c6c6" stroke-width="1.6" />
<text x="218.0" y="371.4818181818182" font-size="14.6" fill="#d2d2d2" text-anchor="end" >90</text>
<line x1="218.2" y1="355.45454545454544" x2="223.7" y2="355.45454545454544" stroke="#c6c6c6" stroke-width="1.6" />
<text x="218.0" y="392.73636363636365" font-size="14.6" fill="#d2d2d2" text-anchor="end" >80</text>
<line x1="218.2" y1="376.7090909090909" x2="223.7" y2="376.7090909090909" stroke="#c6c6c6" stroke-width="1.6" />
<text x="218.0" y="413.9909090909091" font-size="14.6" fill="#d2d2d2" text-anchor="end" >70</text>
<line x1="218.2" y1="397.96363636363634" x2="223.7" y2="397.96363636363634" stroke="#c6c6c6" stroke-width="1.6" />
<text x="218.0" y="435.24545454545455" font-size="14.6" fill="#d2d2d2" text-anchor="end" >60</text>
<line x1="218.2" y1="419.2181818181818" x2="223.7" y2="419.2181818181818" stroke="#c6c6c6" stroke-width="1.6" />
<text x="218.0" y="456.5" font-size="14.6" fill="#d2d2d2" text-anchor="end" >50</text>
<line x1="218.2" y1="440.47272727272724" x2="223.7" y2="440.47272727272724" stroke="#c6c6c6" stroke-width="1.6" />
<text x="218.0" y="477.7545454545455" font-size="14.6" fill="#d2d2d2" text-anchor="end" >40</text>
<line x1="218.2" y1="461.72727272727275" x2="223.7" y2="461.72727272727275" stroke="#c6c6c6" stroke-width="1.6" />
<text x="218.0" y="499.00909090909096" font-size="14.6" fill="#d2d2d2" text-anchor="end" >30</text>
<line x1="218.2" y1="482.9818181818182" x2="223.7" y2="482.9818181818182" stroke="#c6c6c6" stroke-width="1.6" />
<text x="218.0" y="520.2636363636364" font-size="14.6" fill="#d2d2d2" text-anchor="end" >20</text>
<line x1="218.2" y1="504.23636363636365" x2="223.7" y2="504.23636363636365" stroke="#c6c6c6" stroke-width="1.6" />
<text x="218.0" y="541.5181818181818" font-size="14.6" fill="#d2d2d2" text-anchor="end" >10</text>
<line x1="218.2" y1="525.4909090909091" x2="223.7" y2="525.4909090909091" stroke="#c6c6c6" stroke-width="1.6" />
<text x="218.0" y="562.7727272727273" font-size="14.6" fill="#d2d2d2" text-anchor="end" >0</text>
<line x1="218.2" y1="546.7454545454545" x2="223.7" y2="546.7454545454545" stroke="#c6c6c6" stroke-width="1.6" />
<line x1="218.2" y1="568.0" x2="223.7" y2="568.0" stroke="#c6c6c6" stroke-width="1.6" />
<rect x="224.7" y="334.2" width="310.2" height="233.8" fill="none" stroke="#989898" stroke-width="2" />
<line x1="224.6" y1="569.0" x2="224.6" y2="575.0" stroke="#c6c6c6" stroke-width="2" />
<text x="224.6" y="591" font-size="14.6" fill="#d2d2d2" text-anchor="middle" >0</text>
<line x1="264.9" y1="569.0" x2="264.9" y2="575.0" stroke="#c6c6c6" stroke-width="2" />
<text x="264.9" y="591" font-size="14.6" fill="#d2d2d2" text-anchor="middle" >2</text>
<line x1="306.2" y1="569.0" x2="306.2" y2="575.0" stroke="#c6c6c6" stroke-width="2" />
<text x="306.2" y="591" font-size="14.6" fill="#d2d2d2" text-anchor="middle" >4</text>
<line x1="347.5" y1="569.0" x2="347.5" y2="575.0" stroke="#c6c6c6" stroke-width="2" />
<text x="347.5" y="591" font-size="14.6" fill="#d2d2d2" text-anchor="middle" >6</text>
<line x1="388.79999999999995" y1="569.0" x2="388.79999999999995" y2="575.0" stroke="#c6c6c6" stroke-width="2" />
<text x="388.79999999999995" y="591" font-size="14.6" fill="#d2d2d2" text-anchor="middle" >8</text>
<line x1="430.1" y1="569.0" x2="430.1" y2="575.0" stroke="#c6c6c6" stroke-width="2" />
<text x="430.1" y="591" font-size="14.6" fill="#d2d2d2" text-anchor="middle" >10</text>
<line x1="471.4" y1="569.0" x2="471.4" y2="575.0" stroke="#c6c6c6" stroke-width="2" />
<text x="471.4" y="591" font-size="14.6" fill="#d2d2d2" text-anchor="middle" >12</text>
<line x1="512.6999999999999" y1="569.0" x2="512.6999999999999" y2="575.0" stroke="#c6c6c6" stroke-width="2" />
<text x="512.6999999999999" y="591" font-size="14.6" fill="#d2d2d2" text-anchor="middle" >14</text>
<text x="881.3" y="239" font-size="14.3" fill="#d2d2d2" textLength="84.5" lengthAdjust="spacingAndGlyphs" text-anchor="middle" >RGB Balance</text>
<line x1="602.8" y1="286.4" x2="1186.8" y2="286.4" stroke="#868686" stroke-width="1.7" />
<line x1="602.8" y1="326.4" x2="1186.8" y2="326.4" stroke="#868686" stroke-width="1.7" />
<line x1="602.8" y1="366.8" x2="1186.8" y2="366.8" stroke="#868686" stroke-width="1.7" />
<line x1="602.8" y1="408.2" x2="1186.8" y2="408.2" stroke="#868686" stroke-width="1.7" />
<line x1="602.8" y1="448.1" x2="1186.8" y2="448.1" stroke="#868686" stroke-width="1.7" />
<line x1="602.8" y1="488.4" x2="1186.8" y2="488.4" stroke="#868686" stroke-width="1.7" />
<line x1="602.8" y1="528.8" x2="1186.8" y2="528.8" stroke="#868686" stroke-width="1.7" />
<line x1="596.8" y1="245.8" x2="601.8" y2="245.8" stroke="#c6c6c6" stroke-width="1.6" />
<text x="596.5999999999999" y="251.10000000000002" font-size="14.6" fill="#d2d2d2" text-anchor="end" >40</text>
<line x1="596.8" y1="286.4" x2="601.8" y2="286.4" stroke="#c6c6c6" stroke-width="1.6" />
<text x="596.5999999999999" y="291.7" font-size="14.6" fill="#d2d2d2" text-anchor="end" >30</text>
<line x1="596.8" y1="326.4" x2="601.8" y2="326.4" stroke="#c6c6c6" stroke-width="1.6" />
<text x="596.5999999999999" y="331.7" font-size="14.6" fill="#d2d2d2" text-anchor="end" >20</text>
<line x1="596.8" y1="366.8" x2="601.8" y2="366.8" stroke="#c6c6c6" stroke-width="1.6" />
<text x="596.5999999999999" y="372.1" font-size="14.6" fill="#d2d2d2" text-anchor="end" >10</text>
<line x1="596.8" y1="408.2" x2="601.8" y2="408.2" stroke="#c6c6c6" stroke-width="1.6" />
<text x="596.5999999999999" y="413.5" font-size="14.6" fill="#d2d2d2" text-anchor="end" >0</text>
<line x1="596.8" y1="448.1" x2="601.8" y2="448.1" stroke="#c6c6c6" stroke-width="1.6" />
<text x="596.5999999999999" y="453.40000000000003" font-size="14.6" fill="#d2d2d2" text-anchor="end" >-10</text>
<line x1="596.8" y1="488.4" x2="601.8" y2="488.4" stroke="#c6c6c6" stroke-width="1.6" />
<text x="596.5999999999999" y="493.7" font-size="14.6" fill="#d2d2d2" text-anchor="end" >-20</text>
<line x1="596.8" y1="528.8" x2="601.8" y2="528.8" stroke="#c6c6c6" stroke-width="1.6" />
<text x="596.5999999999999" y="534.0999999999999" font-size="14.6" fill="#d2d2d2" text-anchor="end" >-30</text>
<line x1="596.8" y1="568.6" x2="601.8" y2="568.6" stroke="#c6c6c6" stroke-width="1.6" />
<text x="596.5999999999999" y="575.5" font-size="14.6" fill="#d2d2d2" text-anchor="end" >-40</text>
<line x1="602.8" y1="569.6" x2="602.8" y2="575.2" stroke="#c6c6c6" stroke-width="2" />
<text x="602.3" y="590.6" font-size="14.6" fill="#d2d2d2" text-anchor="middle" >0</text>
<line x1="661.1999999999999" y1="569.6" x2="661.1999999999999" y2="575.2" stroke="#c6c6c6" stroke-width="2" />
<text x="661.1999999999999" y="590.6" font-size="14.6" fill="#d2d2d2" text-anchor="middle" >10</text>
<line x1="719.5999999999999" y1="569.6" x2="719.5999999999999" y2="575.2" stroke="#c6c6c6" stroke-width="2" />
<text x="719.5999999999999" y="590.6" font-size="14.6" fill="#d2d2d2" text-anchor="middle" >20</text>
<line x1="778.0" y1="569.6" x2="778.0" y2="575.2" stroke="#c6c6c6" stroke-width="2" />
<text x="778.0" y="590.6" font-size="14.6" fill="#d2d2d2" text-anchor="middle" >30</text>
<line x1="836.4" y1="569.6" x2="836.4" y2="575.2" stroke="#c6c6c6" stroke-width="2" />
<text x="836.4" y="590.6" font-size="14.6" fill="#d2d2d2" text-anchor="middle" >40</text>
<line x1="894.8" y1="569.6" x2="894.8" y2="575.2" stroke="#c6c6c6" stroke-width="2" />
<text x="894.8" y="590.6" font-size="14.6" fill="#d2d2d2" text-anchor="middle" >50</text>
<line x1="953.1999999999999" y1="569.6" x2="953.1999999999999" y2="575.2" stroke="#c6c6c6" stroke-width="2" />
<text x="953.1999999999999" y="590.6" font-size="14.6" fill="#d2d2d2" text-anchor="middle" >60</text>
<line x1="1011.5999999999999" y1="569.6" x2="1011.5999999999999" y2="575.2" stroke="#c6c6c6" stroke-width="2" />
<text x="1011.5999999999999" y="590.6" font-size="14.6" fill="#d2d2d2" text-anchor="middle" >70</text>
<line x1="1070.0" y1="569.6" x2="1070.0" y2="575.2" stroke="#c6c6c6" stroke-width="2" />
<text x="1070.0" y="590.6" font-size="14.6" fill="#d2d2d2" text-anchor="middle" >80</text>
<line x1="1128.4" y1="569.6" x2="1128.4" y2="575.2" stroke="#c6c6c6" stroke-width="2" />
<text x="1128.4" y="590.6" font-size="14.6" fill="#d2d2d2" text-anchor="middle" >90</text>
<line x1="1186.8" y1="569.6" x2="1186.8" y2="575.2" stroke="#c6c6c6" stroke-width="2" />
<text x="1186.8" y="590.6" font-size="14.6" fill="#d2d2d2" text-anchor="middle" >100</text>
<clipPath id="cpr"><rect x="602.8" y="245.6" width="584.0" height="323.0"/></clipPath>
<polyline points="602.8,398.1 661.2,407.2 719.6,394.0 778.0,390.5 836.4,377.5 894.8,383.9 953.2,392.1 1011.6,388.8 1070.0,393.1 1128.4,403.3 1186.8,441.5" fill="none" stroke="#ff0000" stroke-width="2.8" stroke-linejoin="round" clip-path="url(#cpr)"/>
<polyline points="602.8,395.5 661.2,397.3 719.6,379.5 778.0,372.9 836.4,354.7 894.8,357.6 953.2,361.2 1011.6,354.7 1070.0,355.5 1128.4,362.0 1186.8,395.5" fill="none" stroke="#008000" stroke-width="2.8" stroke-linejoin="round" clip-path="url(#cpr)"/>
<polyline points="602.8,389.6 661.2,394.4 719.6,381.0 778.0,376.1 836.4,360.4 894.8,364.4 953.2,369.4 1011.6,363.7 1070.0,364.5 1128.4,368.5 1186.8,395.9" fill="none" stroke="#0000ff" stroke-width="2.8" stroke-linejoin="round" clip-path="url(#cpr)"/>
<rect x="602.8" y="245.6" width="584.0" height="323.0" fill="none" stroke="#989898" stroke-width="2" />
<line x1="602.8" y1="246.2" x2="1186.8" y2="246.2" stroke="#989898" stroke-width="1.6" />
<text x="1300.8" y="239" font-size="14.3" fill="#d2d2d2" textLength="84.5" lengthAdjust="spacingAndGlyphs" text-anchor="middle" >RGB Balance</text>
<line x1="1242.0" y1="246.19999999999996" x2="1247.0" y2="246.19999999999996" stroke="#c6c6c6" stroke-width="1.6" />
<text x="1241.8" y="251.49999999999997" font-size="14.6" fill="#d2d2d2" text-anchor="end" >10</text>
<line x1="1242.0" y1="328.9" x2="1247.0" y2="328.9" stroke="#c6c6c6" stroke-width="1.6" />
<text x="1241.8" y="334.2" font-size="14.6" fill="#d2d2d2" text-anchor="end" >5</text>
<line x1="1242.0" y1="410.4" x2="1247.0" y2="410.4" stroke="#c6c6c6" stroke-width="1.6" />
<text x="1241.8" y="415.7" font-size="14.6" fill="#d2d2d2" text-anchor="end" >0</text>
<line x1="1242.0" y1="492.5" x2="1247.0" y2="492.5" stroke="#c6c6c6" stroke-width="1.6" />
<text x="1241.8" y="497.8" font-size="14.6" fill="#d2d2d2" text-anchor="end" >-5</text>
<line x1="1242.0" y1="574.0" x2="1247.0" y2="574.0" stroke="#c6c6c6" stroke-width="1.6" />
<text x="1241.8" y="581.3" font-size="14.6" fill="#d2d2d2" text-anchor="end" >-10</text>
<rect x="1248.0" y="245.6" width="133.5999999999999" height="328.4" fill="none" stroke="#989898" stroke-width="1.8" />
<line x1="1248.0" y1="246.2" x2="1381.6" y2="246.2" stroke="#989898" stroke-width="1.6" />
<line x1="1248.0" y1="575.0" x2="1248.0" y2="580.4" stroke="#c6c6c6" stroke-width="1.8" />
<line x1="1381.6" y1="575.0" x2="1381.6" y2="580.4" stroke="#c6c6c6" stroke-width="1.8" />
<text x="1314.3" y="590.6" font-size="14.6" fill="#d2d2d2" text-anchor="middle" >100</text>
<text x="1630" y="239" font-size="14.3" fill="#d2d2d2" textLength="111.0" lengthAdjust="spacingAndGlyphs" text-anchor="middle" >Gamma Log/Log</text>
<line x1="1441.8" y1="311.0" x2="1845.6" y2="311.0" stroke="#868686" stroke-width="1.7" />
<line x1="1441.8" y1="374.9" x2="1845.6" y2="374.9" stroke="#868686" stroke-width="1.7" />
<line x1="1441.8" y1="440.4" x2="1845.6" y2="440.4" stroke="#868686" stroke-width="1.7" />
<line x1="1441.8" y1="505.0" x2="1845.6" y2="505.0" stroke="#868686" stroke-width="1.7" />
<line x1="1435.3999999999999" y1="245.8" x2="1440.3999999999999" y2="245.8" stroke="#c6c6c6" stroke-width="1.6" />
<text x="1435.0" y="251.10000000000002" font-size="14.6" fill="#d2d2d2" text-anchor="end" >2.8</text>
<line x1="1435.3999999999999" y1="311.0" x2="1440.3999999999999" y2="311.0" stroke="#c6c6c6" stroke-width="1.6" />
<text x="1435.0" y="316.3" font-size="14.6" fill="#d2d2d2" text-anchor="end" >2.6</text>
<line x1="1435.3999999999999" y1="374.9" x2="1440.3999999999999" y2="374.9" stroke="#c6c6c6" stroke-width="1.6" />
<text x="1435.0" y="380.2" font-size="14.6" fill="#d2d2d2" text-anchor="end" >2.4</text>
<line x1="1435.3999999999999" y1="440.4" x2="1440.3999999999999" y2="440.4" stroke="#c6c6c6" stroke-width="1.6" />
<text x="1435.0" y="445.7" font-size="14.6" fill="#d2d2d2" text-anchor="end" >2.2</text>
<line x1="1435.3999999999999" y1="505.0" x2="1440.3999999999999" y2="505.0" stroke="#c6c6c6" stroke-width="1.6" />
<text x="1435.0" y="510.3" font-size="14.6" fill="#d2d2d2" text-anchor="end" >2</text>
<line x1="1435.3999999999999" y1="568.6" x2="1440.3999999999999" y2="568.6" stroke="#c6c6c6" stroke-width="1.6" />
<text x="1435.0" y="575.5" font-size="14.6" fill="#d2d2d2" text-anchor="end" >1.8</text>
<line x1="1441.8" y1="569.6" x2="1441.8" y2="575.2" stroke="#c6c6c6" stroke-width="2" />
<text x="1440.9" y="590.6" font-size="14.6" fill="#d2d2d2" text-anchor="middle" >0</text>
<line x1="1521.75" y1="569.6" x2="1521.75" y2="575.2" stroke="#c6c6c6" stroke-width="2" />
<text x="1521.75" y="590.6" font-size="14.6" fill="#d2d2d2" text-anchor="middle" >20</text>
<line x1="1602.6000000000001" y1="569.6" x2="1602.6000000000001" y2="575.2" stroke="#c6c6c6" stroke-width="2" />
<text x="1602.6000000000001" y="590.6" font-size="14.6" fill="#d2d2d2" text-anchor="middle" >40</text>
<line x1="1683.45" y1="569.6" x2="1683.45" y2="575.2" stroke="#c6c6c6" stroke-width="2" />
<text x="1683.45" y="590.6" font-size="14.6" fill="#d2d2d2" text-anchor="middle" >60</text>
<line x1="1764.3000000000002" y1="569.6" x2="1764.3000000000002" y2="575.2" stroke="#c6c6c6" stroke-width="2" />
<text x="1764.3000000000002" y="590.6" font-size="14.6" fill="#d2d2d2" text-anchor="middle" >80</text>
<line x1="1845.15" y1="569.6" x2="1845.15" y2="575.2" stroke="#c6c6c6" stroke-width="2" />
<text x="1845.15" y="590.6" font-size="14.6" fill="#d2d2d2" text-anchor="middle" >100</text>
<clipPath id="cpg"><rect x="1441.8" y="245.6" width="403.79999999999995" height="323.0"/></clipPath>
<polyline points="1440.9,737.4 1481.3,512.2 1521.8,497.2 1562.2,489.2 1602.6,506.1 1643.0,502.0 1683.5,501.1 1723.9,532.7 1764.3,574.2 1804.7,671.5 1845.2,415.5" fill="none" stroke="#858585" stroke-width="2.6" stroke-linejoin="round" clip-path="url(#cpg)"/>
<polyline points="1453.0,588.5 1455.0,576.3 1457.1,565.8 1459.1,556.7 1461.1,548.7 1463.1,541.6 1465.2,535.2 1467.2,529.5 1469.2,524.3 1471.2,519.5 1473.2,515.2 1475.3,511.2 1477.3,507.5 1479.3,504.0 1481.3,500.8 1483.3,497.8 1485.4,495.0 1487.4,492.4 1489.4,489.9 1491.4,487.6 1493.5,485.4 1495.5,483.3 1497.5,481.3 1499.5,479.4 1501.5,477.6 1503.6,475.9 1505.6,474.2 1507.6,472.7 1509.6,471.2 1511.6,469.8 1513.7,468.4 1515.7,467.1 1517.7,465.8 1519.7,464.6 1521.8,463.4 1523.8,462.3 1525.8,461.2 1527.8,460.1 1529.8,459.1 1531.9,458.2 1533.9,457.2 1535.9,456.3 1537.9,455.4 1539.9,454.5 1542.0,453.7 1544.0,452.9 1546.0,452.1 1548.0,451.4 1550.0,450.6 1552.1,449.9 1554.1,449.2 1556.1,448.5 1558.1,447.8 1560.2,447.2 1562.2,446.6 1564.2,446.0 1566.2,445.4 1568.2,444.8 1570.3,444.2 1572.3,443.7 1574.3,443.1 1576.3,442.6 1578.3,442.1 1580.4,441.6 1582.4,441.1 1584.4,440.6 1586.4,440.1 1588.5,439.6 1590.5,439.2 1592.5,438.7 1594.5,438.3 1596.5,437.9 1598.6,437.5 1600.6,437.1 1602.6,436.7 1604.6,436.3 1606.6,435.9 1608.7,435.5 1610.7,435.1 1612.7,434.8 1614.7,434.4 1616.7,434.1 1618.8,433.7 1620.8,433.4 1622.8,433.0 1624.8,432.7 1626.9,432.4 1628.9,432.1 1630.9,431.8 1632.9,431.5 1634.9,431.2 1637.0,430.9 1639.0,430.6 1641.0,430.3 1643.0,430.0 1645.0,429.7 1647.1,429.5 1649.1,429.2 1651.1,428.9 1653.1,428.7 1655.2,428.4 1657.2,428.2 1659.2,427.9 1661.2,427.7 1663.2,427.4 1665.3,427.2 1667.3,426.9 1669.3,426.7 1671.3,426.5 1673.3,426.3 1675.4,426.0 1677.4,425.8 1679.4,425.6 1681.4,425.4 1683.5,425.2 1685.5,425.0 1687.5,424.8 1689.5,424.6 1691.5,424.4 1693.6,424.2 1695.6,424.0 1697.6,423.8 1699.6,423.6 1701.6,423.4 1703.7,423.2 1705.7,423.0 1707.7,422.8 1709.7,422.7 1711.7,422.5 1713.8,422.3 1715.8,422.1 1717.8,422.0 1719.8,421.8 1721.9,421.6 1723.9,421.5 1725.9,421.3 1727.9,421.2 1729.9,421.0 1732.0,420.8 1734.0,420.7 1736.0,420.5 1738.0,420.4 1740.0,420.2 1742.1,420.1 1744.1,419.9 1746.1,419.8 1748.1,419.6 1750.2,419.5 1752.2,419.4 1754.2,419.2 1756.2,419.1 1758.2,418.9 1760.3,418.8 1762.3,418.7 1764.3,418.5 1766.3,418.4 1768.3,418.3 1770.4,418.1 1772.4,418.0 1774.4,417.9 1776.4,417.8 1778.4,417.6 1780.5,417.5 1782.5,417.4 1784.5,417.3 1786.5,417.2 1788.6,417.0 1790.6,416.9 1792.6,416.8 1794.6,416.7 1796.6,416.6 1798.7,416.5 1800.7,416.3 1802.7,416.2 1804.7,416.1 1806.7,416.0 1808.8,415.9 1810.8,415.8 1812.8,415.7 1814.8,415.6 1816.9,415.5 1818.9,415.4 1820.9,415.3 1822.9,415.2 1824.9,415.1 1827.0,415.0 1829.0,414.9 1831.0,414.8 1833.0,414.7 1835.0,414.6 1837.1,414.5 1839.1,414.4 1841.1,414.3 1843.1,414.2 1845.2,414.1" fill="none" stroke="#ffff00" stroke-width="2.6" stroke-linejoin="round" clip-path="url(#cpg)"/>
<rect x="1441.8" y="245.6" width="403.79999999999995" height="323.0" fill="none" stroke="#989898" stroke-width="2" />
<line x1="1441.8" y1="246.2" x2="1845.6" y2="246.2" stroke="#989898" stroke-width="1.6" />
<text x="261" y="633" font-size="29.4" fill="#f2f2f2" textLength="220.0" lengthAdjust="spacingAndGlyphs" >Avg dE2000: 4.1</text>
<text x="680" y="633" font-size="29.4" fill="#f2f2f2" textLength="194.0" lengthAdjust="spacingAndGlyphs" >Avg CCT: 6807</text>
<text x="1062" y="633" font-size="29.4" fill="#f2f2f2" textLength="281.0" lengthAdjust="spacingAndGlyphs" >Contrast Ratio: 1045</text>
<text x="1469" y="633" font-size="29.4" fill="#f2f2f2" textLength="321.0" lengthAdjust="spacingAndGlyphs" >Average Gamma: 1.915</text>
<text x="355.0" y="777.9" font-size="12" fill="#fff" text-anchor="middle" stroke="#fff" stroke-width=".35">0</text>
<text x="498.2" y="777.9" font-size="12" fill="#fff" text-anchor="middle" stroke="#fff" stroke-width=".35">10</text>
<text x="641.5" y="777.9" font-size="12" fill="#fff" text-anchor="middle" stroke="#fff" stroke-width=".35">20</text>
<text x="784.8" y="777.9" font-size="12" fill="#fff" text-anchor="middle" stroke="#fff" stroke-width=".35">30</text>
<text x="928.0" y="777.9" font-size="12" fill="#fff" text-anchor="middle" stroke="#fff" stroke-width=".35">40</text>
<text x="1071.2" y="777.9" font-size="12" fill="#fff" text-anchor="middle" stroke="#fff" stroke-width=".35">50</text>
<text x="1214.5" y="777.9" font-size="12" fill="#fff" text-anchor="middle" stroke="#fff" stroke-width=".35">60</text>
<text x="1357.8" y="777.9" font-size="12" fill="#fff" text-anchor="middle" stroke="#fff" stroke-width=".35">70</text>
<text x="1501.0" y="777.9" font-size="12" fill="#fff" text-anchor="middle" stroke="#fff" stroke-width=".35">80</text>
<text x="1644.2" y="777.9" font-size="12" fill="#fff" text-anchor="middle" stroke="#fff" stroke-width=".35">90</text>
<text x="1787.5" y="777.9" font-size="12" fill="#fff" text-anchor="middle" stroke="#fff" stroke-width=".35">100</text>
<text transform="translate(285,700.2) rotate(-90)" font-size="12.2" fill="#fff" stroke="#fff" stroke-width=".3" textLength="35.3" lengthAdjust="spacingAndGlyphs">Actual</text>
<text transform="translate(285,758.5) rotate(-90)" font-size="12.2" fill="#fff" stroke="#fff" stroke-width=".3" textLength="35.8" lengthAdjust="spacingAndGlyphs">Target</text>
<text x="195" y="854.4" font-size="27.6" fill="#f2f2f2" textLength="223.0" lengthAdjust="spacingAndGlyphs" >Current Reading</text>
<text x="195" y="898" font-size="25" fill="#f2f2f2" textLength="104.4" lengthAdjust="spacingAndGlyphs" >x: 0.3059</text>
<text x="347.6" y="898" font-size="25" fill="#f2f2f2" textLength="90.4" lengthAdjust="spacingAndGlyphs" >y: 0.329</text>
<text x="195" y="932.4" font-size="25" fill="#f2f2f2" textLength="113.0" lengthAdjust="spacingAndGlyphs" >u': 0.1931</text>
<text x="347.6" y="932.4" font-size="25" fill="#f2f2f2" textLength="110.8" lengthAdjust="spacingAndGlyphs" >v': 0.4673</text>
<text x="195" y="967" font-size="25" fill="#f2f2f2" textLength="191.0" lengthAdjust="spacingAndGlyphs" >cd/m²: 230.2926</text>
<text x="195" y="1001.6" font-size="25" fill="#f2f2f2" textLength="156.6" lengthAdjust="spacingAndGlyphs" >ΔE 2000: 5.02</text>
<text x="655.7" y="820.6" font-size="14.3" fill="#d2d2d2" textLength="76.6" lengthAdjust="spacingAndGlyphs" text-anchor="middle" >CIE 1931 xy</text>
<clipPath id="cpc"><rect x="544.5" y="825.5" width="257.5" height="169.0"/></clipPath>
<path d="M563.4 1003.6 Q 690 920 816 845" fill="none" stroke="#000" stroke-width="3" clip-path="url(#cpc)"/>
<rect x="544.5" y="825.5" width="257.5" height="169.0" fill="none" stroke="#9a9a9a" stroke-width="1.6" />
<line x1="538.5" y1="874.0" x2="544.5" y2="874.0" stroke="#989898" stroke-width="1.4" />
<text x="538.0" y="879.2" font-size="14" fill="#d2d2d2" textLength="28.0" lengthAdjust="spacingAndGlyphs" text-anchor="end" >0.34</text>
<line x1="538.5" y1="942.0" x2="544.5" y2="942.0" stroke="#989898" stroke-width="1.4" />
<text x="538.0" y="947.2" font-size="14" fill="#d2d2d2" textLength="28.0" lengthAdjust="spacingAndGlyphs" text-anchor="end" >0.32</text>
<line x1="556.4" y1="994.5" x2="556.4" y2="1000.5" stroke="#989898" stroke-width="1.4" />
<text x="556.4" y="1016.6" font-size="14" fill="#d2d2d2" text-anchor="middle" >0.29</text>
<line x1="607.7" y1="994.5" x2="607.7" y2="1000.5" stroke="#989898" stroke-width="1.4" />
<text x="607.7" y="1016.6" font-size="14" fill="#d2d2d2" text-anchor="middle" >0.3</text>
<line x1="659.0000000000001" y1="994.5" x2="659.0000000000001" y2="1000.5" stroke="#989898" stroke-width="1.4" />
<text x="659.0000000000001" y="1016.6" font-size="14" fill="#d2d2d2" text-anchor="middle" >0.31</text>
<line x1="710.3000000000002" y1="994.5" x2="710.3000000000002" y2="1000.5" stroke="#989898" stroke-width="1.4" />
<text x="710.3000000000002" y="1016.6" font-size="14" fill="#d2d2d2" text-anchor="middle" >0.32</text>
<line x1="761.6000000000001" y1="994.5" x2="761.6000000000001" y2="1000.5" stroke="#989898" stroke-width="1.4" />
<text x="761.6000000000001" y="1016.6" font-size="14" fill="#d2d2d2" text-anchor="middle" >0.33</text>
<circle cx="626.7" cy="922.6" r="4" fill="rgb(20,20,20)" stroke="#000" stroke-width="1"/>
<circle cx="643.6" cy="904.9" r="4" fill="rgb(51,51,51)" stroke="#000" stroke-width="1"/>
<circle cx="647.7" cy="901.8" r="4" fill="rgb(76,76,76)" stroke="#000" stroke-width="1"/>
<circle cx="647.7" cy="900.8" r="4" fill="rgb(102,102,102)" stroke="#000" stroke-width="1"/>
<circle cx="648.2" cy="900.5" r="4" fill="rgb(128,128,128)" stroke="#000" stroke-width="1"/>
<circle cx="648.2" cy="900.5" r="4" fill="rgb(153,153,153)" stroke="#000" stroke-width="1"/>
<circle cx="647.7" cy="900.5" r="4" fill="rgb(178,178,178)" stroke="#000" stroke-width="1"/>
<circle cx="647.2" cy="901.1" r="4" fill="rgb(204,204,204)" stroke="#000" stroke-width="1"/>
<circle cx="644.1" cy="903.9" r="4" fill="rgb(230,230,230)" stroke="#000" stroke-width="1"/>
<circle cx="638.0" cy="909.3" r="4" fill="rgb(255,255,255)" stroke="#000" stroke-width="1"/>
<rect x="666.8" y="902.9" width="13" height="13" fill="#fff" stroke="#000" stroke-width="1.6" />
<text x="933.4" y="814" font-size="13.7" fill="#f4f4f4" textLength="7.0" lengthAdjust="spacingAndGlyphs" >0</text>
<text x="1008.6" y="814" font-size="13.7" fill="#f4f4f4" textLength="13.9" lengthAdjust="spacingAndGlyphs" >10</text>
<text x="1076.7" y="814" font-size="13.7" fill="#f4f4f4" textLength="13.9" lengthAdjust="spacingAndGlyphs" >20</text>
<text x="1144.9" y="814" font-size="13.7" fill="#f4f4f4" textLength="13.9" lengthAdjust="spacingAndGlyphs" >30</text>
<text x="1213.1" y="814" font-size="13.7" fill="#f4f4f4" textLength="13.9" lengthAdjust="spacingAndGlyphs" >40</text>
<text x="1281.2" y="814" font-size="13.7" fill="#f4f4f4" textLength="13.9" lengthAdjust="spacingAndGlyphs" >50</text>
<text x="1349.2" y="814" font-size="13.7" fill="#f4f4f4" textLength="13.9" lengthAdjust="spacingAndGlyphs" >60</text>
<text x="1417.3" y="814" font-size="13.7" fill="#f4f4f4" textLength="13.9" lengthAdjust="spacingAndGlyphs" >70</text>
<text x="1485.5" y="814" font-size="13.7" fill="#f4f4f4" textLength="13.9" lengthAdjust="spacingAndGlyphs" >80</text>
<text x="1553.7" y="814" font-size="13.7" fill="#f4f4f4" textLength="13.9" lengthAdjust="spacingAndGlyphs" >90</text>
<text x="1621.9" y="814" font-size="13.7" fill="#f4f4f4" textLength="20.9" lengthAdjust="spacingAndGlyphs" >100</text>
<text x="827.4" y="839.4" font-size="13.7" fill="#f4f4f4" textLength="44.6" lengthAdjust="spacingAndGlyphs" >x: CIE31</text>
<text x="933.4" y="839.4" font-size="13.7" fill="#f4f4f4" textLength="38.3" lengthAdjust="spacingAndGlyphs" >0.2673</text>
<text x="1008.6" y="839.4" font-size="13.7" fill="#f4f4f4" textLength="38.3" lengthAdjust="spacingAndGlyphs" >0.3037</text>
<text x="1076.7" y="839.4" font-size="13.7" fill="#f4f4f4" textLength="38.3" lengthAdjust="spacingAndGlyphs" >0.3070</text>
<text x="1144.9" y="839.4" font-size="13.7" fill="#f4f4f4" textLength="38.3" lengthAdjust="spacingAndGlyphs" >0.3078</text>
<text x="1213.1" y="839.4" font-size="13.7" fill="#f4f4f4" textLength="38.3" lengthAdjust="spacingAndGlyphs" >0.3078</text>
<text x="1281.2" y="839.4" font-size="13.7" fill="#f4f4f4" textLength="38.3" lengthAdjust="spacingAndGlyphs" >0.3079</text>
<text x="1349.2" y="839.4" font-size="13.7" fill="#f4f4f4" textLength="38.3" lengthAdjust="spacingAndGlyphs" >0.3079</text>
<text x="1417.3" y="839.4" font-size="13.7" fill="#f4f4f4" textLength="38.3" lengthAdjust="spacingAndGlyphs" >0.3078</text>
<text x="1485.5" y="839.4" font-size="13.7" fill="#f4f4f4" textLength="38.3" lengthAdjust="spacingAndGlyphs" >0.3077</text>
<text x="1553.7" y="839.4" font-size="13.7" fill="#f4f4f4" textLength="38.3" lengthAdjust="spacingAndGlyphs" >0.3071</text>
<text x="1621.9" y="839.4" font-size="13.7" fill="#f4f4f4" textLength="38.3" lengthAdjust="spacingAndGlyphs" >0.3059</text>
<text x="827.4" y="863.0" font-size="13.7" fill="#f0f0f0" textLength="44.6" lengthAdjust="spacingAndGlyphs" >y: CIE31</text>
<text x="933.4" y="863.0" font-size="13.7" fill="#f0f0f0" textLength="38.3" lengthAdjust="spacingAndGlyphs" >0.2743</text>
<text x="1008.6" y="863.0" font-size="13.7" fill="#f0f0f0" textLength="38.3" lengthAdjust="spacingAndGlyphs" >0.3251</text>
<text x="1076.7" y="863.0" font-size="13.7" fill="#f0f0f0" textLength="38.3" lengthAdjust="spacingAndGlyphs" >0.3303</text>
<text x="1144.9" y="863.0" font-size="13.7" fill="#f0f0f0" textLength="38.3" lengthAdjust="spacingAndGlyphs" >0.3312</text>
<text x="1213.1" y="863.0" font-size="13.7" fill="#f0f0f0" textLength="38.3" lengthAdjust="spacingAndGlyphs" >0.3315</text>
<text x="1281.2" y="863.0" font-size="13.7" fill="#f0f0f0" textLength="38.3" lengthAdjust="spacingAndGlyphs" >0.3316</text>
<text x="1349.2" y="863.0" font-size="13.7" fill="#f0f0f0" textLength="38.3" lengthAdjust="spacingAndGlyphs" >0.3316</text>
<text x="1417.3" y="863.0" font-size="13.7" fill="#f0f0f0" textLength="38.3" lengthAdjust="spacingAndGlyphs" >0.3316</text>
<text x="1485.5" y="863.0" font-size="13.7" fill="#f0f0f0" textLength="38.3" lengthAdjust="spacingAndGlyphs" >0.3314</text>
<text x="1553.7" y="863.0" font-size="13.7" fill="#f0f0f0" textLength="38.3" lengthAdjust="spacingAndGlyphs" >0.3306</text>
<text x="1621.9" y="863.0" font-size="13.7" fill="#f0f0f0" textLength="38.3" lengthAdjust="spacingAndGlyphs" >0.3290</text>
<text x="827.4" y="886.4" font-size="13.7" fill="#f4f4f4" textLength="7.4" lengthAdjust="spacingAndGlyphs" >Y</text>
<text x="933.4" y="886.4" font-size="13.7" fill="#f4f4f4" textLength="38.3" lengthAdjust="spacingAndGlyphs" >0.2205</text>
<text x="1008.6" y="886.4" font-size="13.7" fill="#f4f4f4" textLength="38.3" lengthAdjust="spacingAndGlyphs" >2.5331</text>
<text x="1076.7" y="886.4" font-size="13.7" fill="#f4f4f4" textLength="38.3" lengthAdjust="spacingAndGlyphs" >8.8956</text>
<text x="1144.9" y="886.4" font-size="13.7" fill="#f4f4f4" textLength="45.3" lengthAdjust="spacingAndGlyphs" >19.3367</text>
<text x="1213.1" y="886.4" font-size="13.7" fill="#f4f4f4" textLength="45.3" lengthAdjust="spacingAndGlyphs" >37.0429</text>
<text x="1281.2" y="886.4" font-size="13.7" fill="#f4f4f4" textLength="45.3" lengthAdjust="spacingAndGlyphs" >57.7509</text>
<text x="1349.2" y="886.4" font-size="13.7" fill="#f4f4f4" textLength="45.3" lengthAdjust="spacingAndGlyphs" >82.4935</text>
<text x="1417.3" y="886.4" font-size="13.7" fill="#f4f4f4" textLength="51.4" lengthAdjust="spacingAndGlyphs" >115.8231</text>
<text x="1485.5" y="886.4" font-size="13.7" fill="#f4f4f4" textLength="52.3" lengthAdjust="spacingAndGlyphs" >154.6870</text>
<text x="1553.7" y="886.4" font-size="13.7" fill="#f4f4f4" textLength="52.3" lengthAdjust="spacingAndGlyphs" >197.6415</text>
<text x="1621.9" y="886.4" font-size="13.7" fill="#f4f4f4" textLength="52.3" lengthAdjust="spacingAndGlyphs" >230.2926</text>
<text x="827.4" y="910.0" font-size="13.7" fill="#f0f0f0" textLength="46.6" lengthAdjust="spacingAndGlyphs" >Target Y</text>
<text x="933.4" y="910.0" font-size="13.7" fill="#f0f0f0" textLength="38.3" lengthAdjust="spacingAndGlyphs" >0.0000</text>
<text x="1008.6" y="910.0" font-size="13.7" fill="#f0f0f0" textLength="38.3" lengthAdjust="spacingAndGlyphs" >2.3789</text>
<text x="1076.7" y="910.0" font-size="13.7" fill="#f0f0f0" textLength="38.3" lengthAdjust="spacingAndGlyphs" >7.6238</text>
<text x="1144.9" y="910.0" font-size="13.7" fill="#f0f0f0" textLength="45.3" lengthAdjust="spacingAndGlyphs" >16.6437</text>
<text x="1213.1" y="910.0" font-size="13.7" fill="#f0f0f0" textLength="45.3" lengthAdjust="spacingAndGlyphs" >30.5986</text>
<text x="1281.2" y="910.0" font-size="13.7" fill="#f0f0f0" textLength="43.5" lengthAdjust="spacingAndGlyphs" >49.7111</text>
<text x="1349.2" y="910.0" font-size="13.7" fill="#f0f0f0" textLength="45.3" lengthAdjust="spacingAndGlyphs" >73.3590</text>
<text x="1417.3" y="910.0" font-size="13.7" fill="#f0f0f0" textLength="52.3" lengthAdjust="spacingAndGlyphs" >102.5265</text>
<text x="1485.5" y="910.0" font-size="13.7" fill="#f0f0f0" textLength="52.3" lengthAdjust="spacingAndGlyphs" >139.0570</text>
<text x="1553.7" y="910.0" font-size="13.7" fill="#f0f0f0" textLength="52.3" lengthAdjust="spacingAndGlyphs" >182.2301</text>
<text x="1621.9" y="910.0" font-size="13.7" fill="#f0f0f0" textLength="52.3" lengthAdjust="spacingAndGlyphs" >230.2926</text>
<text x="827.4" y="933.4" font-size="13.7" fill="#f4f4f4" textLength="97.6" lengthAdjust="spacingAndGlyphs" >Gamma Log/Log</text>
<text x="933.4" y="933.4" font-size="13.7" fill="#f4f4f4" textLength="38.3" lengthAdjust="spacingAndGlyphs" >1.2778</text>
<text x="1008.6" y="933.4" font-size="13.7" fill="#f4f4f4" textLength="38.3" lengthAdjust="spacingAndGlyphs" >1.9753</text>
<text x="1076.7" y="933.4" font-size="13.7" fill="#f4f4f4" textLength="38.3" lengthAdjust="spacingAndGlyphs" >2.0217</text>
<text x="1144.9" y="933.4" font-size="13.7" fill="#f4f4f4" textLength="38.3" lengthAdjust="spacingAndGlyphs" >2.0465</text>
<text x="1213.1" y="933.4" font-size="13.7" fill="#f4f4f4" textLength="38.3" lengthAdjust="spacingAndGlyphs" >1.9942</text>
<text x="1281.2" y="933.4" font-size="13.7" fill="#f4f4f4" textLength="38.3" lengthAdjust="spacingAndGlyphs" >2.0069</text>
<text x="1349.2" y="933.4" font-size="13.7" fill="#f4f4f4" textLength="38.3" lengthAdjust="spacingAndGlyphs" >2.0097</text>
<text x="1417.3" y="933.4" font-size="13.7" fill="#f4f4f4" textLength="37.4" lengthAdjust="spacingAndGlyphs" >1.9119</text>
<text x="1485.5" y="933.4" font-size="13.7" fill="#f4f4f4" textLength="38.3" lengthAdjust="spacingAndGlyphs" >1.7834</text>
<text x="1553.7" y="933.4" font-size="13.7" fill="#f4f4f4" textLength="38.3" lengthAdjust="spacingAndGlyphs" >1.4818</text>
<text x="1621.9" y="933.4" font-size="13.7" fill="#f4f4f4" textLength="38.3" lengthAdjust="spacingAndGlyphs" >2.2749</text>
<text x="827.4" y="957.4" font-size="13.7" fill="#f0f0f0" textLength="22.2" lengthAdjust="spacingAndGlyphs" >CCT</text>
<text x="933.4" y="957.4" font-size="13.7" fill="#f0f0f0" textLength="66.2" lengthAdjust="spacingAndGlyphs" >12605.0000</text>
<text x="1008.6" y="957.4" font-size="13.7" fill="#f0f0f0" textLength="59.3" lengthAdjust="spacingAndGlyphs" >7056.0000</text>
<text x="1076.7" y="957.4" font-size="13.7" fill="#f0f0f0" textLength="59.3" lengthAdjust="spacingAndGlyphs" >6809.0000</text>
<text x="1144.9" y="957.4" font-size="13.7" fill="#f0f0f0" textLength="59.3" lengthAdjust="spacingAndGlyphs" >6757.0000</text>
<text x="1213.1" y="957.4" font-size="13.7" fill="#f0f0f0" textLength="59.3" lengthAdjust="spacingAndGlyphs" >6751.0000</text>
<text x="1281.2" y="957.4" font-size="13.7" fill="#f0f0f0" textLength="59.3" lengthAdjust="spacingAndGlyphs" >6749.0000</text>
<text x="1349.2" y="957.4" font-size="13.7" fill="#f0f0f0" textLength="59.3" lengthAdjust="spacingAndGlyphs" >6749.0000</text>
<text x="1417.3" y="957.4" font-size="13.7" fill="#f0f0f0" textLength="59.3" lengthAdjust="spacingAndGlyphs" >6751.0000</text>
<text x="1485.5" y="957.4" font-size="13.7" fill="#f0f0f0" textLength="59.3" lengthAdjust="spacingAndGlyphs" >6762.0000</text>
<text x="1553.7" y="957.4" font-size="13.7" fill="#f0f0f0" textLength="59.3" lengthAdjust="spacingAndGlyphs" >6799.0000</text>
<text x="1621.9" y="957.4" font-size="13.7" fill="#f0f0f0" textLength="59.3" lengthAdjust="spacingAndGlyphs" >6886.0000</text>
<text x="827.4" y="981.0" font-size="13.7" fill="#f4f4f4" textLength="47.6" lengthAdjust="spacingAndGlyphs" >ΔE 2000</text>
<text x="933.4" y="981.0" font-size="13.7" fill="#f4f4f4" textLength="38.3" lengthAdjust="spacingAndGlyphs" >0.9373</text>
<text x="1008.6" y="981.0" font-size="13.7" fill="#f4f4f4" textLength="38.3" lengthAdjust="spacingAndGlyphs" >1.2098</text>
<text x="1076.7" y="981.0" font-size="13.7" fill="#f4f4f4" textLength="38.3" lengthAdjust="spacingAndGlyphs" >2.2818</text>
<text x="1144.9" y="981.0" font-size="13.7" fill="#f4f4f4" textLength="38.3" lengthAdjust="spacingAndGlyphs" >3.0637</text>
<text x="1213.1" y="981.0" font-size="13.7" fill="#f4f4f4" textLength="38.3" lengthAdjust="spacingAndGlyphs" >4.7150</text>
<text x="1281.2" y="981.0" font-size="13.7" fill="#f4f4f4" textLength="38.3" lengthAdjust="spacingAndGlyphs" >4.7740</text>
<text x="1349.2" y="981.0" font-size="13.7" fill="#f4f4f4" textLength="38.3" lengthAdjust="spacingAndGlyphs" >4.5969</text>
<text x="1417.3" y="981.0" font-size="13.7" fill="#f4f4f4" textLength="38.3" lengthAdjust="spacingAndGlyphs" >5.0081</text>
<text x="1485.5" y="981.0" font-size="13.7" fill="#f4f4f4" textLength="38.3" lengthAdjust="spacingAndGlyphs" >5.1454</text>
<text x="1553.7" y="981.0" font-size="13.7" fill="#f4f4f4" textLength="38.3" lengthAdjust="spacingAndGlyphs" >5.1897</text>
<text x="1621.9" y="981.0" font-size="13.7" fill="#f4f4f4" textLength="38.3" lengthAdjust="spacingAndGlyphs" >5.0181</text>
<text x="827.4" y="1005.0" font-size="13.7" fill="#f0f0f0" textLength="32.0" lengthAdjust="spacingAndGlyphs" >dEITP</text>
<text x="933.4" y="1005.0" font-size="13.7" fill="#f0f0f0" textLength="45.3" lengthAdjust="spacingAndGlyphs" >63.0612</text>
<text x="1008.6" y="1005.0" font-size="13.7" fill="#f0f0f0" textLength="38.3" lengthAdjust="spacingAndGlyphs" >4.2870</text>
<text x="1076.7" y="1005.0" font-size="13.7" fill="#f0f0f0" textLength="38.3" lengthAdjust="spacingAndGlyphs" >8.9832</text>
<text x="1144.9" y="1005.0" font-size="13.7" fill="#f0f0f0" textLength="38.3" lengthAdjust="spacingAndGlyphs" >9.6654</text>
<text x="1213.1" y="1005.0" font-size="13.7" fill="#f0f0f0" textLength="45.3" lengthAdjust="spacingAndGlyphs" >12.9679</text>
<text x="1281.2" y="1005.0" font-size="13.7" fill="#f0f0f0" textLength="45.3" lengthAdjust="spacingAndGlyphs" >10.8500</text>
<text x="1349.2" y="1005.0" font-size="13.7" fill="#f0f0f0" textLength="38.3" lengthAdjust="spacingAndGlyphs" >9.0429</text>
<text x="1417.3" y="1005.0" font-size="13.7" fill="#f0f0f0" textLength="38.3" lengthAdjust="spacingAndGlyphs" >9.5708</text>
<text x="1485.5" y="1005.0" font-size="13.7" fill="#f0f0f0" textLength="38.3" lengthAdjust="spacingAndGlyphs" >8.7355</text>
<text x="1553.7" y="1005.0" font-size="13.7" fill="#f0f0f0" textLength="38.3" lengthAdjust="spacingAndGlyphs" >7.3193</text>
<text x="1621.9" y="1005.0" font-size="13.7" fill="#f0f0f0" textLength="38.3" lengthAdjust="spacingAndGlyphs" >4.6923</text>
<text x="237.2" y="1194" font-size="9" fill="#24242a" text-anchor="middle" stroke="#24242a" stroke-width=".25">0</text>
<text x="366.4" y="1194" font-size="9" fill="#24242a" text-anchor="middle" stroke="#24242a" stroke-width=".25">10</text>
<text x="495.7" y="1194" font-size="9" fill="#24242a" text-anchor="middle" stroke="#24242a" stroke-width=".25">20</text>
<text x="625.0" y="1194" font-size="9" fill="#24242a" text-anchor="middle" stroke="#24242a" stroke-width=".25">30</text>
<text x="754.2" y="1194" font-size="9" fill="#24242a" text-anchor="middle" stroke="#24242a" stroke-width=".25">40</text>
<text x="883.5" y="1194" font-size="9" fill="#24242a" text-anchor="middle" stroke="#24242a" stroke-width=".25">50</text>
<text x="1012.7" y="1194" font-size="9" fill="#24242a" text-anchor="middle" stroke="#24242a" stroke-width=".25">60</text>
<text x="1142.0" y="1194" font-size="9" fill="#24242a" text-anchor="middle" stroke="#24242a" stroke-width=".25">70</text>
<text x="1271.2" y="1194" font-size="9" fill="#24242a" text-anchor="middle" stroke="#24242a" stroke-width=".25">80</text>
<text x="1400.5" y="1194" font-size="9" fill="#24242a" text-anchor="middle" stroke="#24242a" stroke-width=".25">90</text>
<text x="1529.7" y="1194" font-size="9" fill="#fff" text-anchor="middle" font-weight="bold" >100</text>
<text x="1665.2" y="1189.6" font-size="13" fill="#2e2e2e" text-anchor="middle" >«</text>
<text x="1848.4" y="1189.6" font-size="13" fill="#2e2e2e" text-anchor="middle" >»</text>
<text x="1688.3" y="1192.4" font-size="19.2" fill="#2c2c2c" textLength="43.2" lengthAdjust="spacingAndGlyphs" >Back</text>
<text x="1779.8" y="1192.4" font-size="19.2" fill="#2c2c2c" textLength="44.2" lengthAdjust="spacingAndGlyphs" >Next</text>
<g stroke-linejoin="round" stroke-linecap="round" fill="none"><path d="M1545 1130.5 L1588 1139.5 L1589.5 1164 M1545 1130.5 L1547.5 1171 L1572.5 1185.5 L1618.5 1170.2 L1593.5 1165.8" stroke="#e8e8e8" stroke-opacity=".5" stroke-width="7"/><path d="M1545 1130.5 L1588 1139.5 L1589.5 1164 M1545 1130.5 L1547.5 1171 L1572.5 1185.5 L1618.5 1170.2 L1593.5 1165.8" stroke="#96222f" stroke-opacity=".7" stroke-width="4.2"/><path d="M1589.5 1163.6 L1556 1166.6 L1589.5 1165.2 Z" fill="#b03440" fill-opacity=".6" stroke="#b03440" stroke-opacity=".5" stroke-width=".8"/><path d="M1555.6 1145.2 Q1558.5 1141.6 1562.4 1141.6 Q1567.5 1145.4 1570.8 1150.4 Q1580 1138 1594.2 1127.6 Q1583 1141.5 1575 1159.6 L1570 1160.8 Q1563.5 1150.5 1555.6 1145.2 Z" fill="#333" fill-opacity=".82" stroke="#ececec" stroke-opacity=".7" stroke-width="1.3"/></g>
<text x="1595.6" y="1162.2" font-size="29" font-weight="bold" fill="#8e1f2d" fill-opacity="0.78" stroke="#ececec" stroke-opacity="0.55" stroke-width="2.6" paint-order="stroke" textLength="169" lengthAdjust="spacingAndGlyphs">NOTEBOOK</text>
<text x="1766" y="1162.2" font-size="29" fill="#1c1c1c" fill-opacity="0.85" stroke="#ececec" stroke-opacity="0.55" stroke-width="2.2" paint-order="stroke" textLength="100" lengthAdjust="spacingAndGlyphs">CHECK</text>
</svg>
</div></body></html>
